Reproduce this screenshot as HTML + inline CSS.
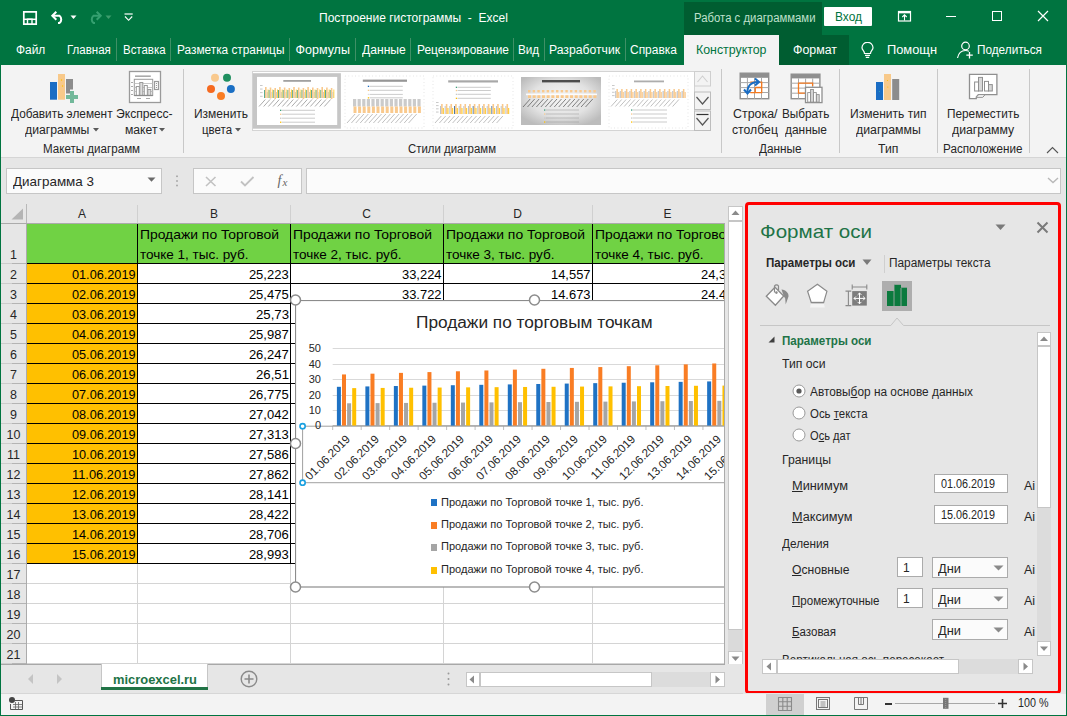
<!DOCTYPE html>
<html><head><meta charset="utf-8"><title>Excel</title>
<style>
html,body{margin:0;padding:0;}
body{width:1067px;height:716px;overflow:hidden;position:relative;background:#007440;font-family:'Liberation Sans', sans-serif;}
svg{display:block}
</style></head><body>
<div style="position:absolute;left:319.00px;top:11.84px;font-family:'Liberation Sans', sans-serif;font-size:12px;line-height:12px;height:12px;font-weight:400;color:#fff;white-space:pre;">Построение гистограммы  -  Excel</div>
<div style="position:absolute;left:684px;top:2px;width:138px;height:33px;background:#005d31;"></div>
<div style="position:absolute;left:684px;top:35px;width:165px;height:30px;background:#005d31;"></div>
<div style="position:absolute;left:693.50px;top:11.84px;font-family:'Liberation Sans', sans-serif;font-size:12px;line-height:12px;height:12px;font-weight:400;color:#bfe0cc;white-space:pre;transform:scaleX(0.9455);transform-origin:0 0;">Работа с диаграммами</div>
<div style="position:absolute;left:824px;top:7px;width:48px;height:18.5px;background:#fff;border-radius:1px;"></div>
<div style="position:absolute;left:835.00px;top:11.34px;font-family:'Liberation Sans', sans-serif;font-size:12px;line-height:12px;height:12px;font-weight:400;color:#007440;white-space:pre;transform:scaleX(0.9942);transform-origin:0 0;">Вход</div>
<div style="position:absolute;left:15.70px;top:43.92px;font-family:'Liberation Sans', sans-serif;font-size:12.5px;line-height:12.5px;height:12.5px;font-weight:400;color:#fff;white-space:pre;transform:scaleX(0.9533);transform-origin:0 0;">Файл</div>
<div style="position:absolute;left:67.00px;top:43.92px;font-family:'Liberation Sans', sans-serif;font-size:12.5px;line-height:12.5px;height:12.5px;font-weight:400;color:#fff;white-space:pre;transform:scaleX(0.9206);transform-origin:0 0;">Главная</div>
<div style="position:absolute;left:122.50px;top:43.92px;font-family:'Liberation Sans', sans-serif;font-size:12.5px;line-height:12.5px;height:12.5px;font-weight:400;color:#fff;white-space:pre;transform:scaleX(0.9167);transform-origin:0 0;">Вставка</div>
<div style="position:absolute;left:176.50px;top:43.92px;font-family:'Liberation Sans', sans-serif;font-size:12.5px;line-height:12.5px;height:12.5px;font-weight:400;color:#fff;white-space:pre;transform:scaleX(0.9470);transform-origin:0 0;">Разметка страницы</div>
<div style="position:absolute;left:295.50px;top:43.92px;font-family:'Liberation Sans', sans-serif;font-size:12.5px;line-height:12.5px;height:12.5px;font-weight:400;color:#fff;white-space:pre;">Формулы</div>
<div style="position:absolute;left:361.50px;top:43.92px;font-family:'Liberation Sans', sans-serif;font-size:12.5px;line-height:12.5px;height:12.5px;font-weight:400;color:#fff;white-space:pre;transform:scaleX(0.9696);transform-origin:0 0;">Данные</div>
<div style="position:absolute;left:416.50px;top:43.92px;font-family:'Liberation Sans', sans-serif;font-size:12.5px;line-height:12.5px;height:12.5px;font-weight:400;color:#fff;white-space:pre;transform:scaleX(0.9531);transform-origin:0 0;">Рецензирование</div>
<div style="position:absolute;left:518.30px;top:43.92px;font-family:'Liberation Sans', sans-serif;font-size:12.5px;line-height:12.5px;height:12.5px;font-weight:400;color:#fff;white-space:pre;transform:scaleX(0.9370);transform-origin:0 0;">Вид</div>
<div style="position:absolute;left:549.40px;top:43.92px;font-family:'Liberation Sans', sans-serif;font-size:12.5px;line-height:12.5px;height:12.5px;font-weight:400;color:#fff;white-space:pre;transform:scaleX(0.9752);transform-origin:0 0;">Разработчик</div>
<div style="position:absolute;left:630.30px;top:43.92px;font-family:'Liberation Sans', sans-serif;font-size:12.5px;line-height:12.5px;height:12.5px;font-weight:400;color:#fff;white-space:pre;transform:scaleX(0.9562);transform-origin:0 0;">Справка</div>
<div style="position:absolute;left:116px;top:38px;width:1px;height:23px;background:#3f9066;"></div>
<div style="position:absolute;left:170px;top:38px;width:1px;height:23px;background:#3f9066;"></div>
<div style="position:absolute;left:289px;top:38px;width:1px;height:23px;background:#3f9066;"></div>
<div style="position:absolute;left:355px;top:38px;width:1px;height:23px;background:#3f9066;"></div>
<div style="position:absolute;left:410px;top:38px;width:1px;height:23px;background:#3f9066;"></div>
<div style="position:absolute;left:513px;top:38px;width:1px;height:23px;background:#3f9066;"></div>
<div style="position:absolute;left:544px;top:38px;width:1px;height:23px;background:#3f9066;"></div>
<div style="position:absolute;left:625px;top:38px;width:1px;height:23px;background:#3f9066;"></div>
<div style="position:absolute;left:684px;top:35px;width:95px;height:30px;background:#f3f3f3;"></div>
<div style="position:absolute;left:696.00px;top:43.92px;font-family:'Liberation Sans', sans-serif;font-size:12.5px;line-height:12.5px;height:12.5px;font-weight:400;color:#007440;white-space:pre;transform:scaleX(0.9890);transform-origin:0 0;">Конструктор</div>
<div style="position:absolute;left:792.50px;top:43.92px;font-family:'Liberation Sans', sans-serif;font-size:12.5px;line-height:12.5px;height:12.5px;font-weight:400;color:#fff;white-space:pre;transform:scaleX(0.9909);transform-origin:0 0;">Формат</div>
<div style="position:absolute;left:887.00px;top:43.92px;font-family:'Liberation Sans', sans-serif;font-size:12.5px;line-height:12.5px;height:12.5px;font-weight:400;color:#fff;white-space:pre;transform:scaleX(1.0273);transform-origin:0 0;">Помощн</div>
<div style="position:absolute;left:977.00px;top:43.92px;font-family:'Liberation Sans', sans-serif;font-size:12.5px;line-height:12.5px;height:12.5px;font-weight:400;color:#fff;white-space:pre;transform:scaleX(0.9416);transform-origin:0 0;">Поделиться</div>
<div style="position:absolute;left:1px;top:65px;width:1065px;height:92px;background:#f3f3f3;"></div>
<div style="position:absolute;left:1px;top:157px;width:1065px;height:1px;background:#d5d5d5;"></div>
<div style="position:absolute;left:183px;top:69px;width:1px;height:84px;background:#c8c8c8;"></div>
<div style="position:absolute;left:721px;top:69px;width:1px;height:84px;background:#c8c8c8;"></div>
<div style="position:absolute;left:839px;top:69px;width:1px;height:84px;background:#c8c8c8;"></div>
<div style="position:absolute;left:937px;top:69px;width:1px;height:84px;background:#c8c8c8;"></div>
<div style="position:absolute;left:1029px;top:69px;width:1px;height:84px;background:#c8c8c8;"></div>
<div style="position:absolute;left:10.50px;top:108.32px;font-family:'Liberation Sans', sans-serif;font-size:12.5px;line-height:12.5px;height:12.5px;font-weight:400;color:#262626;white-space:pre;transform:scaleX(0.9473);transform-origin:0 0;">Добавить элемент</div>
<div style="position:absolute;left:25.10px;top:124.22px;font-family:'Liberation Sans', sans-serif;font-size:12.5px;line-height:12.5px;height:12.5px;font-weight:400;color:#262626;white-space:pre;transform:scaleX(0.9776);transform-origin:0 0;">диаграммы</div>
<div style="position:absolute;left:116.20px;top:108.32px;font-family:'Liberation Sans', sans-serif;font-size:12.5px;line-height:12.5px;height:12.5px;font-weight:400;color:#262626;white-space:pre;transform:scaleX(0.9727);transform-origin:0 0;">Экспресс-</div>
<div style="position:absolute;left:124.50px;top:124.22px;font-family:'Liberation Sans', sans-serif;font-size:12.5px;line-height:12.5px;height:12.5px;font-weight:400;color:#262626;white-space:pre;transform:scaleX(0.9724);transform-origin:0 0;">макет</div>
<div style="position:absolute;left:43.00px;top:143.42px;font-family:'Liberation Sans', sans-serif;font-size:12.5px;line-height:12.5px;height:12.5px;font-weight:400;color:#262626;white-space:pre;transform:scaleX(0.9272);transform-origin:0 0;">Макеты диаграмм</div>
<div style="position:absolute;left:194.00px;top:108.32px;font-family:'Liberation Sans', sans-serif;font-size:12.5px;line-height:12.5px;height:12.5px;font-weight:400;color:#262626;white-space:pre;transform:scaleX(0.9594);transform-origin:0 0;">Изменить</div>
<div style="position:absolute;left:201.50px;top:124.22px;font-family:'Liberation Sans', sans-serif;font-size:12.5px;line-height:12.5px;height:12.5px;font-weight:400;color:#262626;white-space:pre;transform:scaleX(0.9165);transform-origin:0 0;">цвета</div>
<div style="position:absolute;left:407.50px;top:143.42px;font-family:'Liberation Sans', sans-serif;font-size:12.5px;line-height:12.5px;height:12.5px;font-weight:400;color:#262626;white-space:pre;transform:scaleX(0.9131);transform-origin:0 0;">Стили диаграмм</div>
<div style="position:absolute;left:733.00px;top:108.32px;font-family:'Liberation Sans', sans-serif;font-size:12.5px;line-height:12.5px;height:12.5px;font-weight:400;color:#262626;white-space:pre;transform:scaleX(0.9927);transform-origin:0 0;">Строка/</div>
<div style="position:absolute;left:732.10px;top:124.22px;font-family:'Liberation Sans', sans-serif;font-size:12.5px;line-height:12.5px;height:12.5px;font-weight:400;color:#262626;white-space:pre;transform:scaleX(0.9779);transform-origin:0 0;">столбец</div>
<div style="position:absolute;left:781.90px;top:108.32px;font-family:'Liberation Sans', sans-serif;font-size:12.5px;line-height:12.5px;height:12.5px;font-weight:400;color:#262626;white-space:pre;transform:scaleX(0.9412);transform-origin:0 0;">Выбрать</div>
<div style="position:absolute;left:784.50px;top:124.22px;font-family:'Liberation Sans', sans-serif;font-size:12.5px;line-height:12.5px;height:12.5px;font-weight:400;color:#262626;white-space:pre;transform:scaleX(0.9545);transform-origin:0 0;">данные</div>
<div style="position:absolute;left:758.50px;top:143.42px;font-family:'Liberation Sans', sans-serif;font-size:12.5px;line-height:12.5px;height:12.5px;font-weight:400;color:#262626;white-space:pre;transform:scaleX(0.9431);transform-origin:0 0;">Данные</div>
<div style="position:absolute;left:849.50px;top:108.32px;font-family:'Liberation Sans', sans-serif;font-size:12.5px;line-height:12.5px;height:12.5px;font-weight:400;color:#262626;white-space:pre;transform:scaleX(0.9642);transform-origin:0 0;">Изменить тип</div>
<div style="position:absolute;left:855.50px;top:124.22px;font-family:'Liberation Sans', sans-serif;font-size:12.5px;line-height:12.5px;height:12.5px;font-weight:400;color:#262626;white-space:pre;transform:scaleX(0.9837);transform-origin:0 0;">диаграммы</div>
<div style="position:absolute;left:877.50px;top:143.42px;font-family:'Liberation Sans', sans-serif;font-size:12.5px;line-height:12.5px;height:12.5px;font-weight:400;color:#262626;white-space:pre;transform:scaleX(0.9787);transform-origin:0 0;">Тип</div>
<div style="position:absolute;left:946.90px;top:108.32px;font-family:'Liberation Sans', sans-serif;font-size:12.5px;line-height:12.5px;height:12.5px;font-weight:400;color:#262626;white-space:pre;transform:scaleX(0.9439);transform-origin:0 0;">Переместить</div>
<div style="position:absolute;left:952.30px;top:124.22px;font-family:'Liberation Sans', sans-serif;font-size:12.5px;line-height:12.5px;height:12.5px;font-weight:400;color:#262626;white-space:pre;transform:scaleX(0.9829);transform-origin:0 0;">диаграмму</div>
<div style="position:absolute;left:943.10px;top:143.42px;font-family:'Liberation Sans', sans-serif;font-size:12.5px;line-height:12.5px;height:12.5px;font-weight:400;color:#262626;white-space:pre;transform:scaleX(0.9345);transform-origin:0 0;">Расположение</div>
<div style="position:absolute;left:1px;top:158px;width:1065px;height:46px;background:#e6e6e6;"></div>
<div style="position:absolute;left:6px;top:168px;width:156px;height:26px;background:#fbfbfb;border:1px solid #c6c6c6;box-sizing:border-box;"></div>
<div style="position:absolute;left:13.00px;top:175.00px;font-family:'Liberation Sans', sans-serif;font-size:13px;line-height:13px;height:13px;font-weight:400;color:#262626;white-space:pre;transform:scaleX(1.0325);transform-origin:0 0;">Диаграмма 3</div>
<div style="position:absolute;left:193px;top:168px;width:109px;height:26px;background:#fbfbfb;border:1px solid #c6c6c6;box-sizing:border-box;"></div>
<div style="position:absolute;left:306px;top:168px;width:755px;height:26px;background:#fbfbfb;border:1px solid #c6c6c6;box-sizing:border-box;"></div>
<div style="position:absolute;left:1px;top:204px;width:742px;height:460px;background:#e6e6e6;"></div>
<div style="position:absolute;left:27px;top:224px;width:697px;height:440px;background:#fff;"></div>
<div style="position:absolute;left:137px;top:224px;width:1px;height:440px;background:#d4d4d4;"></div>
<div style="position:absolute;left:290px;top:224px;width:1px;height:440px;background:#d4d4d4;"></div>
<div style="position:absolute;left:443px;top:224px;width:1px;height:440px;background:#d4d4d4;"></div>
<div style="position:absolute;left:592px;top:224px;width:1px;height:440px;background:#d4d4d4;"></div>
<div style="position:absolute;left:27px;top:263px;width:697px;height:1px;background:#d4d4d4;"></div>
<div style="position:absolute;left:27px;top:283px;width:697px;height:1px;background:#d4d4d4;"></div>
<div style="position:absolute;left:27px;top:303px;width:697px;height:1px;background:#d4d4d4;"></div>
<div style="position:absolute;left:27px;top:323px;width:697px;height:1px;background:#d4d4d4;"></div>
<div style="position:absolute;left:27px;top:343px;width:697px;height:1px;background:#d4d4d4;"></div>
<div style="position:absolute;left:27px;top:363px;width:697px;height:1px;background:#d4d4d4;"></div>
<div style="position:absolute;left:27px;top:383px;width:697px;height:1px;background:#d4d4d4;"></div>
<div style="position:absolute;left:27px;top:403px;width:697px;height:1px;background:#d4d4d4;"></div>
<div style="position:absolute;left:27px;top:423px;width:697px;height:1px;background:#d4d4d4;"></div>
<div style="position:absolute;left:27px;top:443px;width:697px;height:1px;background:#d4d4d4;"></div>
<div style="position:absolute;left:27px;top:463px;width:697px;height:1px;background:#d4d4d4;"></div>
<div style="position:absolute;left:27px;top:483px;width:697px;height:1px;background:#d4d4d4;"></div>
<div style="position:absolute;left:27px;top:503px;width:697px;height:1px;background:#d4d4d4;"></div>
<div style="position:absolute;left:27px;top:523px;width:697px;height:1px;background:#d4d4d4;"></div>
<div style="position:absolute;left:27px;top:543px;width:697px;height:1px;background:#d4d4d4;"></div>
<div style="position:absolute;left:27px;top:563px;width:697px;height:1px;background:#d4d4d4;"></div>
<div style="position:absolute;left:27px;top:583px;width:697px;height:1px;background:#d4d4d4;"></div>
<div style="position:absolute;left:27px;top:603px;width:697px;height:1px;background:#d4d4d4;"></div>
<div style="position:absolute;left:27px;top:623px;width:697px;height:1px;background:#d4d4d4;"></div>
<div style="position:absolute;left:27px;top:643px;width:697px;height:1px;background:#d4d4d4;"></div>
<div style="position:absolute;left:27px;top:663px;width:697px;height:1px;background:#d4d4d4;"></div>
<div style="position:absolute;left:27px;top:224px;width:110px;height:39px;background:#70d244;"></div>
<div style="position:absolute;left:138px;top:224px;width:152px;height:39px;background:#70d244;"></div>
<div style="position:absolute;left:291px;top:224px;width:152px;height:39px;background:#70d244;"></div>
<div style="position:absolute;left:444px;top:224px;width:148px;height:39px;background:#70d244;"></div>
<div style="position:absolute;left:593px;top:224px;width:149px;height:39px;background:#70d244;"></div>
<div style="position:absolute;left:27px;top:264px;width:110px;height:299px;background:#ffc000;"></div>
<div style="position:absolute;left:27px;top:263px;width:697px;height:1px;background:#000;"></div>
<div style="position:absolute;left:27px;top:283px;width:697px;height:1px;background:#000;"></div>
<div style="position:absolute;left:27px;top:303px;width:697px;height:1px;background:#000;"></div>
<div style="position:absolute;left:27px;top:323px;width:697px;height:1px;background:#000;"></div>
<div style="position:absolute;left:27px;top:343px;width:697px;height:1px;background:#000;"></div>
<div style="position:absolute;left:27px;top:363px;width:697px;height:1px;background:#000;"></div>
<div style="position:absolute;left:27px;top:383px;width:697px;height:1px;background:#000;"></div>
<div style="position:absolute;left:27px;top:403px;width:697px;height:1px;background:#000;"></div>
<div style="position:absolute;left:27px;top:423px;width:697px;height:1px;background:#000;"></div>
<div style="position:absolute;left:27px;top:443px;width:697px;height:1px;background:#000;"></div>
<div style="position:absolute;left:27px;top:463px;width:697px;height:1px;background:#000;"></div>
<div style="position:absolute;left:27px;top:483px;width:697px;height:1px;background:#000;"></div>
<div style="position:absolute;left:27px;top:503px;width:697px;height:1px;background:#000;"></div>
<div style="position:absolute;left:27px;top:523px;width:697px;height:1px;background:#000;"></div>
<div style="position:absolute;left:27px;top:543px;width:697px;height:1px;background:#000;"></div>
<div style="position:absolute;left:27px;top:563px;width:697px;height:1px;background:#000;"></div>
<div style="position:absolute;left:137px;top:224px;width:1px;height:339px;background:#000;"></div>
<div style="position:absolute;left:290px;top:224px;width:1px;height:339px;background:#000;"></div>
<div style="position:absolute;left:443px;top:224px;width:1px;height:339px;background:#000;"></div>
<div style="position:absolute;left:592px;top:224px;width:1px;height:339px;background:#000;"></div>
<div style="position:absolute;left:26px;top:204px;width:1px;height:20px;background:#b8b8b8;"></div>
<div style="position:absolute;left:137px;top:205px;width:1px;height:18px;background:#d0d0d0;"></div>
<div style="position:absolute;left:290px;top:205px;width:1px;height:18px;background:#d0d0d0;"></div>
<div style="position:absolute;left:443px;top:205px;width:1px;height:18px;background:#d0d0d0;"></div>
<div style="position:absolute;left:592px;top:205px;width:1px;height:18px;background:#d0d0d0;"></div>
<div style="position:absolute;left:1px;top:223px;width:723px;height:1px;background:#ababab;"></div>
<svg style="position:absolute;left:11px;top:208px;" width="13" height="12" viewBox="0 0 13 12"><polygon points="12,0.5 12,11.5 0.5,11.5" fill="#b4b4b4"/></svg>
<div style="position:absolute;left:77.99px;top:207.84px;font-family:'Liberation Sans', sans-serif;font-size:12px;line-height:12px;height:12px;font-weight:400;color:#262626;white-space:pre;">A</div>
<div style="position:absolute;left:209.99px;top:207.84px;font-family:'Liberation Sans', sans-serif;font-size:12px;line-height:12px;height:12px;font-weight:400;color:#262626;white-space:pre;">B</div>
<div style="position:absolute;left:362.16px;top:207.84px;font-family:'Liberation Sans', sans-serif;font-size:12px;line-height:12px;height:12px;font-weight:400;color:#262626;white-space:pre;">C</div>
<div style="position:absolute;left:513.16px;top:207.84px;font-family:'Liberation Sans', sans-serif;font-size:12px;line-height:12px;height:12px;font-weight:400;color:#262626;white-space:pre;">D</div>
<div style="position:absolute;left:663.49px;top:207.84px;font-family:'Liberation Sans', sans-serif;font-size:12px;line-height:12px;height:12px;font-weight:400;color:#262626;white-space:pre;">E</div>
<div style="position:absolute;left:26px;top:224px;width:1px;height:440px;background:#ababab;"></div>
<div style="position:absolute;left:1px;top:263px;width:25px;height:1px;background:#cdcdcd;"></div>
<div style="position:absolute;left:12px;top:263px;width:14px;height:1px;background:#b4b4b4;"></div>
<div style="position:absolute;left:10.02px;top:248.72px;font-family:'Liberation Sans', sans-serif;font-size:12.5px;line-height:12.5px;height:12.5px;font-weight:400;color:#262626;white-space:pre;">1</div>
<div style="position:absolute;left:1px;top:283px;width:25px;height:1px;background:#cdcdcd;"></div>
<div style="position:absolute;left:12px;top:283px;width:14px;height:1px;background:#b4b4b4;"></div>
<div style="position:absolute;left:10.02px;top:268.72px;font-family:'Liberation Sans', sans-serif;font-size:12.5px;line-height:12.5px;height:12.5px;font-weight:400;color:#262626;white-space:pre;">2</div>
<div style="position:absolute;left:1px;top:303px;width:25px;height:1px;background:#cdcdcd;"></div>
<div style="position:absolute;left:12px;top:303px;width:14px;height:1px;background:#b4b4b4;"></div>
<div style="position:absolute;left:10.02px;top:288.72px;font-family:'Liberation Sans', sans-serif;font-size:12.5px;line-height:12.5px;height:12.5px;font-weight:400;color:#262626;white-space:pre;">3</div>
<div style="position:absolute;left:1px;top:323px;width:25px;height:1px;background:#cdcdcd;"></div>
<div style="position:absolute;left:12px;top:323px;width:14px;height:1px;background:#b4b4b4;"></div>
<div style="position:absolute;left:10.02px;top:308.72px;font-family:'Liberation Sans', sans-serif;font-size:12.5px;line-height:12.5px;height:12.5px;font-weight:400;color:#262626;white-space:pre;">4</div>
<div style="position:absolute;left:1px;top:343px;width:25px;height:1px;background:#cdcdcd;"></div>
<div style="position:absolute;left:12px;top:343px;width:14px;height:1px;background:#b4b4b4;"></div>
<div style="position:absolute;left:10.02px;top:328.72px;font-family:'Liberation Sans', sans-serif;font-size:12.5px;line-height:12.5px;height:12.5px;font-weight:400;color:#262626;white-space:pre;">5</div>
<div style="position:absolute;left:1px;top:363px;width:25px;height:1px;background:#cdcdcd;"></div>
<div style="position:absolute;left:12px;top:363px;width:14px;height:1px;background:#b4b4b4;"></div>
<div style="position:absolute;left:10.02px;top:348.72px;font-family:'Liberation Sans', sans-serif;font-size:12.5px;line-height:12.5px;height:12.5px;font-weight:400;color:#262626;white-space:pre;">6</div>
<div style="position:absolute;left:1px;top:383px;width:25px;height:1px;background:#cdcdcd;"></div>
<div style="position:absolute;left:12px;top:383px;width:14px;height:1px;background:#b4b4b4;"></div>
<div style="position:absolute;left:10.02px;top:368.72px;font-family:'Liberation Sans', sans-serif;font-size:12.5px;line-height:12.5px;height:12.5px;font-weight:400;color:#262626;white-space:pre;">7</div>
<div style="position:absolute;left:1px;top:403px;width:25px;height:1px;background:#cdcdcd;"></div>
<div style="position:absolute;left:12px;top:403px;width:14px;height:1px;background:#b4b4b4;"></div>
<div style="position:absolute;left:10.02px;top:388.72px;font-family:'Liberation Sans', sans-serif;font-size:12.5px;line-height:12.5px;height:12.5px;font-weight:400;color:#262626;white-space:pre;">8</div>
<div style="position:absolute;left:1px;top:423px;width:25px;height:1px;background:#cdcdcd;"></div>
<div style="position:absolute;left:12px;top:423px;width:14px;height:1px;background:#b4b4b4;"></div>
<div style="position:absolute;left:10.02px;top:408.72px;font-family:'Liberation Sans', sans-serif;font-size:12.5px;line-height:12.5px;height:12.5px;font-weight:400;color:#262626;white-space:pre;">9</div>
<div style="position:absolute;left:1px;top:443px;width:25px;height:1px;background:#cdcdcd;"></div>
<div style="position:absolute;left:12px;top:443px;width:14px;height:1px;background:#b4b4b4;"></div>
<div style="position:absolute;left:6.55px;top:428.72px;font-family:'Liberation Sans', sans-serif;font-size:12.5px;line-height:12.5px;height:12.5px;font-weight:400;color:#262626;white-space:pre;">10</div>
<div style="position:absolute;left:1px;top:463px;width:25px;height:1px;background:#cdcdcd;"></div>
<div style="position:absolute;left:12px;top:463px;width:14px;height:1px;background:#b4b4b4;"></div>
<div style="position:absolute;left:7.01px;top:448.72px;font-family:'Liberation Sans', sans-serif;font-size:12.5px;line-height:12.5px;height:12.5px;font-weight:400;color:#262626;white-space:pre;">11</div>
<div style="position:absolute;left:1px;top:483px;width:25px;height:1px;background:#cdcdcd;"></div>
<div style="position:absolute;left:12px;top:483px;width:14px;height:1px;background:#b4b4b4;"></div>
<div style="position:absolute;left:6.55px;top:468.72px;font-family:'Liberation Sans', sans-serif;font-size:12.5px;line-height:12.5px;height:12.5px;font-weight:400;color:#262626;white-space:pre;">12</div>
<div style="position:absolute;left:1px;top:503px;width:25px;height:1px;background:#cdcdcd;"></div>
<div style="position:absolute;left:12px;top:503px;width:14px;height:1px;background:#b4b4b4;"></div>
<div style="position:absolute;left:6.55px;top:488.72px;font-family:'Liberation Sans', sans-serif;font-size:12.5px;line-height:12.5px;height:12.5px;font-weight:400;color:#262626;white-space:pre;">13</div>
<div style="position:absolute;left:1px;top:523px;width:25px;height:1px;background:#cdcdcd;"></div>
<div style="position:absolute;left:12px;top:523px;width:14px;height:1px;background:#b4b4b4;"></div>
<div style="position:absolute;left:6.55px;top:508.72px;font-family:'Liberation Sans', sans-serif;font-size:12.5px;line-height:12.5px;height:12.5px;font-weight:400;color:#262626;white-space:pre;">14</div>
<div style="position:absolute;left:1px;top:543px;width:25px;height:1px;background:#cdcdcd;"></div>
<div style="position:absolute;left:12px;top:543px;width:14px;height:1px;background:#b4b4b4;"></div>
<div style="position:absolute;left:6.55px;top:528.72px;font-family:'Liberation Sans', sans-serif;font-size:12.5px;line-height:12.5px;height:12.5px;font-weight:400;color:#262626;white-space:pre;">15</div>
<div style="position:absolute;left:1px;top:563px;width:25px;height:1px;background:#cdcdcd;"></div>
<div style="position:absolute;left:12px;top:563px;width:14px;height:1px;background:#b4b4b4;"></div>
<div style="position:absolute;left:6.55px;top:548.72px;font-family:'Liberation Sans', sans-serif;font-size:12.5px;line-height:12.5px;height:12.5px;font-weight:400;color:#262626;white-space:pre;">16</div>
<div style="position:absolute;left:1px;top:583px;width:25px;height:1px;background:#cdcdcd;"></div>
<div style="position:absolute;left:12px;top:583px;width:14px;height:1px;background:#b4b4b4;"></div>
<div style="position:absolute;left:6.55px;top:568.72px;font-family:'Liberation Sans', sans-serif;font-size:12.5px;line-height:12.5px;height:12.5px;font-weight:400;color:#262626;white-space:pre;">17</div>
<div style="position:absolute;left:1px;top:603px;width:25px;height:1px;background:#cdcdcd;"></div>
<div style="position:absolute;left:12px;top:603px;width:14px;height:1px;background:#b4b4b4;"></div>
<div style="position:absolute;left:6.55px;top:588.72px;font-family:'Liberation Sans', sans-serif;font-size:12.5px;line-height:12.5px;height:12.5px;font-weight:400;color:#262626;white-space:pre;">18</div>
<div style="position:absolute;left:1px;top:623px;width:25px;height:1px;background:#cdcdcd;"></div>
<div style="position:absolute;left:12px;top:623px;width:14px;height:1px;background:#b4b4b4;"></div>
<div style="position:absolute;left:6.55px;top:608.72px;font-family:'Liberation Sans', sans-serif;font-size:12.5px;line-height:12.5px;height:12.5px;font-weight:400;color:#262626;white-space:pre;">19</div>
<div style="position:absolute;left:1px;top:643px;width:25px;height:1px;background:#cdcdcd;"></div>
<div style="position:absolute;left:12px;top:643px;width:14px;height:1px;background:#b4b4b4;"></div>
<div style="position:absolute;left:6.55px;top:628.72px;font-family:'Liberation Sans', sans-serif;font-size:12.5px;line-height:12.5px;height:12.5px;font-weight:400;color:#262626;white-space:pre;">20</div>
<div style="position:absolute;left:1px;top:663px;width:25px;height:1px;background:#cdcdcd;"></div>
<div style="position:absolute;left:12px;top:663px;width:14px;height:1px;background:#b4b4b4;"></div>
<div style="position:absolute;left:6.55px;top:648.72px;font-family:'Liberation Sans', sans-serif;font-size:12.5px;line-height:12.5px;height:12.5px;font-weight:400;color:#262626;white-space:pre;">21</div>
<div style="position:absolute;left:71.50px;top:267.50px;font-family:'Liberation Sans', sans-serif;font-size:13px;line-height:13px;height:13px;font-weight:400;color:#000;white-space:pre;transform:scaleX(0.9758);transform-origin:0 0;">01.06.2019</div>
<div style="position:absolute;left:248.90px;top:267.50px;font-family:'Liberation Sans', sans-serif;font-size:13px;line-height:13px;height:13px;font-weight:400;color:#000;white-space:pre;">25,223</div>
<div style="position:absolute;left:71.50px;top:287.50px;font-family:'Liberation Sans', sans-serif;font-size:13px;line-height:13px;height:13px;font-weight:400;color:#000;white-space:pre;transform:scaleX(0.9758);transform-origin:0 0;">02.06.2019</div>
<div style="position:absolute;left:248.90px;top:287.50px;font-family:'Liberation Sans', sans-serif;font-size:13px;line-height:13px;height:13px;font-weight:400;color:#000;white-space:pre;">25,475</div>
<div style="position:absolute;left:71.50px;top:307.50px;font-family:'Liberation Sans', sans-serif;font-size:13px;line-height:13px;height:13px;font-weight:400;color:#000;white-space:pre;transform:scaleX(0.9758);transform-origin:0 0;">03.06.2019</div>
<div style="position:absolute;left:255.50px;top:307.50px;font-family:'Liberation Sans', sans-serif;font-size:13px;line-height:13px;height:13px;font-weight:400;color:#000;white-space:pre;transform:scaleX(1.0139);transform-origin:0 0;">25,73</div>
<div style="position:absolute;left:71.50px;top:327.50px;font-family:'Liberation Sans', sans-serif;font-size:13px;line-height:13px;height:13px;font-weight:400;color:#000;white-space:pre;transform:scaleX(0.9758);transform-origin:0 0;">04.06.2019</div>
<div style="position:absolute;left:248.90px;top:327.50px;font-family:'Liberation Sans', sans-serif;font-size:13px;line-height:13px;height:13px;font-weight:400;color:#000;white-space:pre;">25,987</div>
<div style="position:absolute;left:71.50px;top:347.50px;font-family:'Liberation Sans', sans-serif;font-size:13px;line-height:13px;height:13px;font-weight:400;color:#000;white-space:pre;transform:scaleX(0.9758);transform-origin:0 0;">05.06.2019</div>
<div style="position:absolute;left:248.90px;top:347.50px;font-family:'Liberation Sans', sans-serif;font-size:13px;line-height:13px;height:13px;font-weight:400;color:#000;white-space:pre;">26,247</div>
<div style="position:absolute;left:71.50px;top:367.50px;font-family:'Liberation Sans', sans-serif;font-size:13px;line-height:13px;height:13px;font-weight:400;color:#000;white-space:pre;transform:scaleX(0.9758);transform-origin:0 0;">06.06.2019</div>
<div style="position:absolute;left:255.50px;top:367.50px;font-family:'Liberation Sans', sans-serif;font-size:13px;line-height:13px;height:13px;font-weight:400;color:#000;white-space:pre;transform:scaleX(1.0139);transform-origin:0 0;">26,51</div>
<div style="position:absolute;left:71.50px;top:387.50px;font-family:'Liberation Sans', sans-serif;font-size:13px;line-height:13px;height:13px;font-weight:400;color:#000;white-space:pre;transform:scaleX(0.9758);transform-origin:0 0;">07.06.2019</div>
<div style="position:absolute;left:248.90px;top:387.50px;font-family:'Liberation Sans', sans-serif;font-size:13px;line-height:13px;height:13px;font-weight:400;color:#000;white-space:pre;">26,775</div>
<div style="position:absolute;left:71.50px;top:407.50px;font-family:'Liberation Sans', sans-serif;font-size:13px;line-height:13px;height:13px;font-weight:400;color:#000;white-space:pre;transform:scaleX(0.9758);transform-origin:0 0;">08.06.2019</div>
<div style="position:absolute;left:248.90px;top:407.50px;font-family:'Liberation Sans', sans-serif;font-size:13px;line-height:13px;height:13px;font-weight:400;color:#000;white-space:pre;">27,042</div>
<div style="position:absolute;left:71.50px;top:427.50px;font-family:'Liberation Sans', sans-serif;font-size:13px;line-height:13px;height:13px;font-weight:400;color:#000;white-space:pre;transform:scaleX(0.9758);transform-origin:0 0;">09.06.2019</div>
<div style="position:absolute;left:248.90px;top:427.50px;font-family:'Liberation Sans', sans-serif;font-size:13px;line-height:13px;height:13px;font-weight:400;color:#000;white-space:pre;">27,313</div>
<div style="position:absolute;left:71.50px;top:447.50px;font-family:'Liberation Sans', sans-serif;font-size:13px;line-height:13px;height:13px;font-weight:400;color:#000;white-space:pre;transform:scaleX(0.9758);transform-origin:0 0;">10.06.2019</div>
<div style="position:absolute;left:248.90px;top:447.50px;font-family:'Liberation Sans', sans-serif;font-size:13px;line-height:13px;height:13px;font-weight:400;color:#000;white-space:pre;">27,586</div>
<div style="position:absolute;left:71.50px;top:467.50px;font-family:'Liberation Sans', sans-serif;font-size:13px;line-height:13px;height:13px;font-weight:400;color:#000;white-space:pre;transform:scaleX(0.9905);transform-origin:0 0;">11.06.2019</div>
<div style="position:absolute;left:248.90px;top:467.50px;font-family:'Liberation Sans', sans-serif;font-size:13px;line-height:13px;height:13px;font-weight:400;color:#000;white-space:pre;">27,862</div>
<div style="position:absolute;left:71.50px;top:487.50px;font-family:'Liberation Sans', sans-serif;font-size:13px;line-height:13px;height:13px;font-weight:400;color:#000;white-space:pre;transform:scaleX(0.9758);transform-origin:0 0;">12.06.2019</div>
<div style="position:absolute;left:248.90px;top:487.50px;font-family:'Liberation Sans', sans-serif;font-size:13px;line-height:13px;height:13px;font-weight:400;color:#000;white-space:pre;">28,141</div>
<div style="position:absolute;left:71.50px;top:507.50px;font-family:'Liberation Sans', sans-serif;font-size:13px;line-height:13px;height:13px;font-weight:400;color:#000;white-space:pre;transform:scaleX(0.9758);transform-origin:0 0;">13.06.2019</div>
<div style="position:absolute;left:248.90px;top:507.50px;font-family:'Liberation Sans', sans-serif;font-size:13px;line-height:13px;height:13px;font-weight:400;color:#000;white-space:pre;">28,422</div>
<div style="position:absolute;left:71.50px;top:527.50px;font-family:'Liberation Sans', sans-serif;font-size:13px;line-height:13px;height:13px;font-weight:400;color:#000;white-space:pre;transform:scaleX(0.9758);transform-origin:0 0;">14.06.2019</div>
<div style="position:absolute;left:248.90px;top:527.50px;font-family:'Liberation Sans', sans-serif;font-size:13px;line-height:13px;height:13px;font-weight:400;color:#000;white-space:pre;">28,706</div>
<div style="position:absolute;left:71.50px;top:547.50px;font-family:'Liberation Sans', sans-serif;font-size:13px;line-height:13px;height:13px;font-weight:400;color:#000;white-space:pre;transform:scaleX(0.9758);transform-origin:0 0;">15.06.2019</div>
<div style="position:absolute;left:248.90px;top:547.50px;font-family:'Liberation Sans', sans-serif;font-size:13px;line-height:13px;height:13px;font-weight:400;color:#000;white-space:pre;">28,993</div>
<div style="position:absolute;left:139.70px;top:227.90px;font-family:'Liberation Sans', sans-serif;font-size:13px;line-height:13px;height:13px;font-weight:400;color:#000;white-space:pre;transform:scaleX(1.0683);transform-origin:0 0;">Продажи по Торговой</div>
<div style="position:absolute;left:139.70px;top:247.60px;font-family:'Liberation Sans', sans-serif;font-size:13px;line-height:13px;height:13px;font-weight:400;color:#000;white-space:pre;transform:scaleX(1.0386);transform-origin:0 0;">точке 1, тыс. руб.</div>
<div style="position:absolute;left:292.70px;top:227.90px;font-family:'Liberation Sans', sans-serif;font-size:13px;line-height:13px;height:13px;font-weight:400;color:#000;white-space:pre;transform:scaleX(1.0683);transform-origin:0 0;">Продажи по Торговой</div>
<div style="position:absolute;left:292.70px;top:247.60px;font-family:'Liberation Sans', sans-serif;font-size:13px;line-height:13px;height:13px;font-weight:400;color:#000;white-space:pre;transform:scaleX(1.0386);transform-origin:0 0;">точке 2, тыс. руб.</div>
<div style="position:absolute;left:445.70px;top:227.90px;font-family:'Liberation Sans', sans-serif;font-size:13px;line-height:13px;height:13px;font-weight:400;color:#000;white-space:pre;transform:scaleX(1.0683);transform-origin:0 0;">Продажи по Торговой</div>
<div style="position:absolute;left:445.70px;top:247.60px;font-family:'Liberation Sans', sans-serif;font-size:13px;line-height:13px;height:13px;font-weight:400;color:#000;white-space:pre;transform:scaleX(1.0386);transform-origin:0 0;">точке 3, тыс. руб.</div>
<div style="position:absolute;left:594.70px;top:227.90px;font-family:'Liberation Sans', sans-serif;font-size:13px;line-height:13px;height:13px;font-weight:400;color:#000;white-space:pre;transform:scaleX(1.0683);transform-origin:0 0;">Продажи по Торговой</div>
<div style="position:absolute;left:594.70px;top:247.60px;font-family:'Liberation Sans', sans-serif;font-size:13px;line-height:13px;height:13px;font-weight:400;color:#000;white-space:pre;transform:scaleX(1.0386);transform-origin:0 0;">точке 4, тыс. руб.</div>
<div style="position:absolute;left:401.50px;top:267.50px;font-family:'Liberation Sans', sans-serif;font-size:13px;line-height:13px;height:13px;font-weight:400;color:#000;white-space:pre;transform:scaleX(0.9933);transform-origin:0 0;">33,224</div>
<div style="position:absolute;left:550.50px;top:267.50px;font-family:'Liberation Sans', sans-serif;font-size:13px;line-height:13px;height:13px;font-weight:400;color:#000;white-space:pre;transform:scaleX(0.9933);transform-origin:0 0;">14,557</div>
<div style="position:absolute;left:700.50px;top:267.50px;font-family:'Liberation Sans', sans-serif;font-size:13px;line-height:13px;height:13px;font-weight:400;color:#000;white-space:pre;transform:scaleX(0.9933);transform-origin:0 0;">24,374</div>
<div style="position:absolute;left:401.50px;top:287.50px;font-family:'Liberation Sans', sans-serif;font-size:13px;line-height:13px;height:13px;font-weight:400;color:#000;white-space:pre;transform:scaleX(0.9933);transform-origin:0 0;">33.722</div>
<div style="position:absolute;left:550.50px;top:287.50px;font-family:'Liberation Sans', sans-serif;font-size:13px;line-height:13px;height:13px;font-weight:400;color:#000;white-space:pre;transform:scaleX(0.9933);transform-origin:0 0;">14.673</div>
<div style="position:absolute;left:700.50px;top:287.50px;font-family:'Liberation Sans', sans-serif;font-size:13px;line-height:13px;height:13px;font-weight:400;color:#000;white-space:pre;transform:scaleX(0.9933);transform-origin:0 0;">24.496</div>
<div style="position:absolute;left:724px;top:204px;width:19px;height:460px;background:#e6e6e6;"></div>
<div style="position:absolute;left:724px;top:223px;width:1px;height:441px;background:#ababab;"></div>
<div style="position:absolute;left:728px;top:221px;width:15px;height:431px;background:#dadada;"></div>
<div style="position:absolute;left:728px;top:206px;width:15px;height:15px;background:#fff;border:1px solid #c6c6c6;box-sizing:border-box;"></div>
<svg style="position:absolute;left:731px;top:210px;" width="9" height="6" viewBox="0 0 9 6"><polygon points="4.5,0.5 8.5,5 0.5,5" fill="#8a8a8a"/></svg>
<div style="position:absolute;left:728px;top:221px;width:15px;height:409px;background:#fff;border:1px solid #c6c6c6;box-sizing:border-box;"></div>
<div style="position:absolute;left:728px;top:651px;width:15px;height:15px;background:#fff;border:1px solid #c6c6c6;box-sizing:border-box;"></div>
<svg style="position:absolute;left:731px;top:656px;" width="9" height="6" viewBox="0 0 9 6"><polygon points="0.5,0.5 8.5,0.5 4.5,5" fill="#8a8a8a"/></svg>
<svg style="position:absolute;left:295px;top:300px;" width="429" height="288" viewBox="0 0 429 288"><rect x="0.5" y="0.5" width="478" height="286.5" fill="#fff" stroke="#8c8c8c" stroke-width="1.2"/><line x1="37.7" x2="470" y1="48.5" y2="48.5" stroke="#d9d9d9" stroke-width="1"/><line x1="37.7" x2="470" y1="64.5" y2="64.5" stroke="#d9d9d9" stroke-width="1"/><line x1="37.7" x2="470" y1="79.5" y2="79.5" stroke="#d9d9d9" stroke-width="1"/><line x1="37.7" x2="470" y1="95.5" y2="95.5" stroke="#d9d9d9" stroke-width="1"/><line x1="37.7" x2="470" y1="110.5" y2="110.5" stroke="#d9d9d9" stroke-width="1"/><line x1="37.7" x2="470" y1="125.5" y2="125.5" stroke="#b8b8b8" stroke-width="1"/><line x1="37.70" x2="37.70" y1="125.80000000000001" y2="130" stroke="#bfbfbf" stroke-width="1"/><rect x="41.90" y="86.81" width="4" height="38.99" fill="#1f72c4"/><rect x="47.00" y="74.44" width="4" height="51.36" fill="#f97d24"/><rect x="52.10" y="103.29" width="4" height="22.51" fill="#a5a5a5"/><rect x="57.20" y="88.12" width="4" height="37.68" fill="#ffc000"/><line x1="66.18" x2="66.18" y1="125.80000000000001" y2="130" stroke="#bfbfbf" stroke-width="1"/><rect x="70.38" y="86.42" width="4" height="39.38" fill="#1f72c4"/><rect x="75.48" y="73.67" width="4" height="52.13" fill="#f97d24"/><rect x="80.58" y="103.11" width="4" height="22.69" fill="#a5a5a5"/><rect x="85.68" y="87.93" width="4" height="37.87" fill="#ffc000"/><line x1="94.66" x2="94.66" y1="125.80000000000001" y2="130" stroke="#bfbfbf" stroke-width="1"/><rect x="98.86" y="86.02" width="4" height="39.78" fill="#1f72c4"/><rect x="103.96" y="72.88" width="4" height="52.92" fill="#f97d24"/><rect x="109.06" y="102.93" width="4" height="22.87" fill="#a5a5a5"/><rect x="114.16" y="87.74" width="4" height="38.06" fill="#ffc000"/><line x1="123.14" x2="123.14" y1="125.80000000000001" y2="130" stroke="#bfbfbf" stroke-width="1"/><rect x="127.34" y="85.62" width="4" height="40.18" fill="#1f72c4"/><rect x="132.44" y="72.09" width="4" height="53.71" fill="#f97d24"/><rect x="137.54" y="102.75" width="4" height="23.05" fill="#a5a5a5"/><rect x="142.64" y="87.55" width="4" height="38.25" fill="#ffc000"/><line x1="151.62" x2="151.62" y1="125.80000000000001" y2="130" stroke="#bfbfbf" stroke-width="1"/><rect x="155.82" y="85.22" width="4" height="40.58" fill="#1f72c4"/><rect x="160.92" y="71.28" width="4" height="54.52" fill="#f97d24"/><rect x="166.02" y="102.57" width="4" height="23.23" fill="#a5a5a5"/><rect x="171.12" y="87.36" width="4" height="38.44" fill="#ffc000"/><line x1="180.10" x2="180.10" y1="125.80000000000001" y2="130" stroke="#bfbfbf" stroke-width="1"/><rect x="184.30" y="84.82" width="4" height="40.98" fill="#1f72c4"/><rect x="189.40" y="70.47" width="4" height="55.33" fill="#f97d24"/><rect x="194.50" y="102.38" width="4" height="23.42" fill="#a5a5a5"/><rect x="199.60" y="87.17" width="4" height="38.63" fill="#ffc000"/><line x1="208.58" x2="208.58" y1="125.80000000000001" y2="130" stroke="#bfbfbf" stroke-width="1"/><rect x="212.78" y="84.41" width="4" height="41.39" fill="#1f72c4"/><rect x="217.88" y="69.64" width="4" height="56.16" fill="#f97d24"/><rect x="222.98" y="102.19" width="4" height="23.61" fill="#a5a5a5"/><rect x="228.08" y="86.97" width="4" height="38.83" fill="#ffc000"/><line x1="237.06" x2="237.06" y1="125.80000000000001" y2="130" stroke="#bfbfbf" stroke-width="1"/><rect x="241.26" y="83.99" width="4" height="41.81" fill="#1f72c4"/><rect x="246.36" y="68.79" width="4" height="57.01" fill="#f97d24"/><rect x="251.46" y="102.00" width="4" height="23.80" fill="#a5a5a5"/><rect x="256.56" y="86.78" width="4" height="39.02" fill="#ffc000"/><line x1="265.54" x2="265.54" y1="125.80000000000001" y2="130" stroke="#bfbfbf" stroke-width="1"/><rect x="269.74" y="83.57" width="4" height="42.23" fill="#1f72c4"/><rect x="274.84" y="67.94" width="4" height="57.86" fill="#f97d24"/><rect x="279.94" y="101.81" width="4" height="23.99" fill="#a5a5a5"/><rect x="285.04" y="86.58" width="4" height="39.22" fill="#ffc000"/><line x1="294.02" x2="294.02" y1="125.80000000000001" y2="130" stroke="#bfbfbf" stroke-width="1"/><rect x="298.22" y="83.15" width="4" height="42.65" fill="#1f72c4"/><rect x="303.32" y="67.07" width="4" height="58.73" fill="#f97d24"/><rect x="308.42" y="101.62" width="4" height="24.18" fill="#a5a5a5"/><rect x="313.52" y="86.39" width="4" height="39.41" fill="#ffc000"/><line x1="322.50" x2="322.50" y1="125.80000000000001" y2="130" stroke="#bfbfbf" stroke-width="1"/><rect x="326.70" y="82.73" width="4" height="43.07" fill="#1f72c4"/><rect x="331.80" y="66.19" width="4" height="59.61" fill="#f97d24"/><rect x="336.90" y="101.43" width="4" height="24.37" fill="#a5a5a5"/><rect x="342.00" y="86.19" width="4" height="39.61" fill="#ffc000"/><line x1="350.98" x2="350.98" y1="125.80000000000001" y2="130" stroke="#bfbfbf" stroke-width="1"/><rect x="355.18" y="82.29" width="4" height="43.51" fill="#1f72c4"/><rect x="360.28" y="65.30" width="4" height="60.50" fill="#f97d24"/><rect x="365.38" y="101.23" width="4" height="24.57" fill="#a5a5a5"/><rect x="370.48" y="85.99" width="4" height="39.81" fill="#ffc000"/><line x1="379.46" x2="379.46" y1="125.80000000000001" y2="130" stroke="#bfbfbf" stroke-width="1"/><rect x="383.66" y="81.86" width="4" height="43.94" fill="#1f72c4"/><rect x="388.76" y="64.39" width="4" height="61.41" fill="#f97d24"/><rect x="393.86" y="101.04" width="4" height="24.76" fill="#a5a5a5"/><rect x="398.96" y="85.79" width="4" height="40.01" fill="#ffc000"/><line x1="407.94" x2="407.94" y1="125.80000000000001" y2="130" stroke="#bfbfbf" stroke-width="1"/><rect x="412.14" y="81.42" width="4" height="44.38" fill="#1f72c4"/><rect x="417.24" y="63.47" width="4" height="62.33" fill="#f97d24"/><rect x="422.34" y="100.84" width="4" height="24.96" fill="#a5a5a5"/><rect x="427.44" y="85.59" width="4" height="40.21" fill="#ffc000"/><line x1="436.42" x2="436.42" y1="125.80000000000001" y2="130" stroke="#bfbfbf" stroke-width="1"/><rect x="440.62" y="80.98" width="4" height="44.82" fill="#1f72c4"/><rect x="445.72" y="62.53" width="4" height="63.27" fill="#f97d24"/><rect x="450.82" y="100.64" width="4" height="25.16" fill="#a5a5a5"/><rect x="455.92" y="85.39" width="4" height="40.41" fill="#ffc000"/><rect x="7.600000000000023" y="126.19999999999999" width="480" height="56.5" fill="none" stroke="#a0a0a0" stroke-width="1"/></svg>
<div style="position:absolute;left:295px;top:300px;width:429px;height:287px;overflow:hidden">
<div style="position:absolute;left:53.44px;top:137.00px;width:0;height:0;overflow:visible"><div style="position:absolute;right:0;top:-6px;font-family:'Liberation Sans',sans-serif;font-size:11.6px;line-height:12px;white-space:pre;color:#262626;transform-origin:100% 50%;transform:rotate(-45deg)">01.06.2019</div></div>
<div style="position:absolute;left:81.92px;top:137.00px;width:0;height:0;overflow:visible"><div style="position:absolute;right:0;top:-6px;font-family:'Liberation Sans',sans-serif;font-size:11.6px;line-height:12px;white-space:pre;color:#262626;transform-origin:100% 50%;transform:rotate(-45deg)">02.06.2019</div></div>
<div style="position:absolute;left:110.40px;top:137.00px;width:0;height:0;overflow:visible"><div style="position:absolute;right:0;top:-6px;font-family:'Liberation Sans',sans-serif;font-size:11.6px;line-height:12px;white-space:pre;color:#262626;transform-origin:100% 50%;transform:rotate(-45deg)">03.06.2019</div></div>
<div style="position:absolute;left:138.88px;top:137.00px;width:0;height:0;overflow:visible"><div style="position:absolute;right:0;top:-6px;font-family:'Liberation Sans',sans-serif;font-size:11.6px;line-height:12px;white-space:pre;color:#262626;transform-origin:100% 50%;transform:rotate(-45deg)">04.06.2019</div></div>
<div style="position:absolute;left:167.36px;top:137.00px;width:0;height:0;overflow:visible"><div style="position:absolute;right:0;top:-6px;font-family:'Liberation Sans',sans-serif;font-size:11.6px;line-height:12px;white-space:pre;color:#262626;transform-origin:100% 50%;transform:rotate(-45deg)">05.06.2019</div></div>
<div style="position:absolute;left:195.84px;top:137.00px;width:0;height:0;overflow:visible"><div style="position:absolute;right:0;top:-6px;font-family:'Liberation Sans',sans-serif;font-size:11.6px;line-height:12px;white-space:pre;color:#262626;transform-origin:100% 50%;transform:rotate(-45deg)">06.06.2019</div></div>
<div style="position:absolute;left:224.32px;top:137.00px;width:0;height:0;overflow:visible"><div style="position:absolute;right:0;top:-6px;font-family:'Liberation Sans',sans-serif;font-size:11.6px;line-height:12px;white-space:pre;color:#262626;transform-origin:100% 50%;transform:rotate(-45deg)">07.06.2019</div></div>
<div style="position:absolute;left:252.80px;top:137.00px;width:0;height:0;overflow:visible"><div style="position:absolute;right:0;top:-6px;font-family:'Liberation Sans',sans-serif;font-size:11.6px;line-height:12px;white-space:pre;color:#262626;transform-origin:100% 50%;transform:rotate(-45deg)">08.06.2019</div></div>
<div style="position:absolute;left:281.28px;top:137.00px;width:0;height:0;overflow:visible"><div style="position:absolute;right:0;top:-6px;font-family:'Liberation Sans',sans-serif;font-size:11.6px;line-height:12px;white-space:pre;color:#262626;transform-origin:100% 50%;transform:rotate(-45deg)">09.06.2019</div></div>
<div style="position:absolute;left:309.76px;top:137.00px;width:0;height:0;overflow:visible"><div style="position:absolute;right:0;top:-6px;font-family:'Liberation Sans',sans-serif;font-size:11.6px;line-height:12px;white-space:pre;color:#262626;transform-origin:100% 50%;transform:rotate(-45deg)">10.06.2019</div></div>
<div style="position:absolute;left:338.24px;top:137.00px;width:0;height:0;overflow:visible"><div style="position:absolute;right:0;top:-6px;font-family:'Liberation Sans',sans-serif;font-size:11.6px;line-height:12px;white-space:pre;color:#262626;transform-origin:100% 50%;transform:rotate(-45deg)">11.06.2019</div></div>
<div style="position:absolute;left:366.72px;top:137.00px;width:0;height:0;overflow:visible"><div style="position:absolute;right:0;top:-6px;font-family:'Liberation Sans',sans-serif;font-size:11.6px;line-height:12px;white-space:pre;color:#262626;transform-origin:100% 50%;transform:rotate(-45deg)">12.06.2019</div></div>
<div style="position:absolute;left:395.20px;top:137.00px;width:0;height:0;overflow:visible"><div style="position:absolute;right:0;top:-6px;font-family:'Liberation Sans',sans-serif;font-size:11.6px;line-height:12px;white-space:pre;color:#262626;transform-origin:100% 50%;transform:rotate(-45deg)">13.06.2019</div></div>
<div style="position:absolute;left:423.68px;top:137.00px;width:0;height:0;overflow:visible"><div style="position:absolute;right:0;top:-6px;font-family:'Liberation Sans',sans-serif;font-size:11.6px;line-height:12px;white-space:pre;color:#262626;transform-origin:100% 50%;transform:rotate(-45deg)">14.06.2019</div></div>
<div style="position:absolute;left:452.16px;top:137.00px;width:0;height:0;overflow:visible"><div style="position:absolute;right:0;top:-6px;font-family:'Liberation Sans',sans-serif;font-size:11.6px;line-height:12px;white-space:pre;color:#262626;transform-origin:100% 50%;transform:rotate(-45deg)">15.06.2019</div></div>
</div>
<div style="position:absolute;left:308.75px;top:343.19px;font-family:'Liberation Sans', sans-serif;font-size:11px;line-height:11px;height:11px;font-weight:400;color:#262626;white-space:pre;">50</div>
<div style="position:absolute;left:308.75px;top:358.69px;font-family:'Liberation Sans', sans-serif;font-size:11px;line-height:11px;height:11px;font-weight:400;color:#262626;white-space:pre;">40</div>
<div style="position:absolute;left:308.75px;top:374.19px;font-family:'Liberation Sans', sans-serif;font-size:11px;line-height:11px;height:11px;font-weight:400;color:#262626;white-space:pre;">30</div>
<div style="position:absolute;left:308.75px;top:389.69px;font-family:'Liberation Sans', sans-serif;font-size:11px;line-height:11px;height:11px;font-weight:400;color:#262626;white-space:pre;">20</div>
<div style="position:absolute;left:308.75px;top:405.19px;font-family:'Liberation Sans', sans-serif;font-size:11px;line-height:11px;height:11px;font-weight:400;color:#262626;white-space:pre;">10</div>
<div style="position:absolute;left:314.88px;top:420.49px;font-family:'Liberation Sans', sans-serif;font-size:11px;line-height:11px;height:11px;font-weight:400;color:#262626;white-space:pre;">0</div>
<div style="position:absolute;left:416.25px;top:315.13px;font-family:'Liberation Sans', sans-serif;font-size:15.8px;line-height:15.8px;height:15.8px;font-weight:400;color:#262626;white-space:pre;transform:scaleX(1.0921);transform-origin:0 0;">Продажи по торговым точкам</div>
<div style="position:absolute;left:431px;top:499px;width:6px;height:7px;background:#1f72c4;"></div>
<div style="position:absolute;left:440.50px;top:496.52px;font-family:'Liberation Sans', sans-serif;font-size:11.2px;line-height:11.2px;height:11.2px;font-weight:400;color:#262626;white-space:pre;transform:scaleX(0.9879);transform-origin:0 0;">Продажи по Торговой точке 1, тыс. руб.</div>
<div style="position:absolute;left:431px;top:522px;width:6px;height:7px;background:#f97d24;"></div>
<div style="position:absolute;left:440.50px;top:519.12px;font-family:'Liberation Sans', sans-serif;font-size:11.2px;line-height:11.2px;height:11.2px;font-weight:400;color:#262626;white-space:pre;transform:scaleX(0.9879);transform-origin:0 0;">Продажи по Торговой точке 2, тыс. руб.</div>
<div style="position:absolute;left:431px;top:544px;width:6px;height:7px;background:#a5a5a5;"></div>
<div style="position:absolute;left:440.50px;top:540.92px;font-family:'Liberation Sans', sans-serif;font-size:11.2px;line-height:11.2px;height:11.2px;font-weight:400;color:#262626;white-space:pre;transform:scaleX(0.9879);transform-origin:0 0;">Продажи по Торговой точке 3, тыс. руб.</div>
<div style="position:absolute;left:431px;top:567px;width:6px;height:7px;background:#ffc000;"></div>
<div style="position:absolute;left:440.50px;top:563.82px;font-family:'Liberation Sans', sans-serif;font-size:11.2px;line-height:11.2px;height:11.2px;font-weight:400;color:#262626;white-space:pre;transform:scaleX(0.9879);transform-origin:0 0;">Продажи по Торговой точке 4, тыс. руб.</div>
<svg style="position:absolute;left:289px;top:294px;" width="252" height="300" viewBox="0 0 252 300"><circle cx="6.5" cy="6" r="5" fill="#fff" stroke="#8c8c8c" stroke-width="1.5"/><circle cx="245.5" cy="6" r="5" fill="#fff" stroke="#8c8c8c" stroke-width="1.5"/><circle cx="6.5" cy="149.5" r="5" fill="#fff" stroke="#8c8c8c" stroke-width="1.5"/><circle cx="6.5" cy="293" r="5" fill="#fff" stroke="#8c8c8c" stroke-width="1.5"/><circle cx="245.5" cy="293" r="5" fill="#fff" stroke="#8c8c8c" stroke-width="1.5"/></svg>
<svg style="position:absolute;left:297px;top:420px;" width="12" height="70" viewBox="0 0 12 70"><circle cx="5.600000000000023" cy="6.199999999999989" r="2.6" fill="#fff" stroke="#1aa0e0" stroke-width="1.6"/><circle cx="5.600000000000023" cy="62.69999999999999" r="2.6" fill="#fff" stroke="#1aa0e0" stroke-width="1.6"/></svg>
<div style="position:absolute;left:724px;top:204px;width:4px;height:460px;background:#e6e6e6;"></div>
<div style="position:absolute;left:724px;top:223px;width:1px;height:441px;background:#ababab;"></div>
<div style="position:absolute;left:743px;top:204px;width:323px;height:490px;background:#e6e6e6;"></div>
<div style="position:absolute;left:760.00px;top:221.92px;font-family:'Liberation Sans', sans-serif;font-size:19px;line-height:19px;height:19px;font-weight:400;color:#217346;white-space:pre;transform:scaleX(1.0826);transform-origin:0 0;">Формат оси</div>
<svg style="position:absolute;left:995px;top:224px;" width="12" height="7" viewBox="0 0 12 7"><polygon points="0.5,0.5 10.5,0.5 5.5,6" fill="#7a7a7a"/></svg>
<svg style="position:absolute;left:1036px;top:221px;" width="13" height="13" viewBox="0 0 13 13"><path d="M1.5 1.5 L11.5 11.5 M11.5 1.5 L1.5 11.5" stroke="#7a7a7a" stroke-width="2"/></svg>
<div style="position:absolute;left:765.50px;top:257.02px;font-family:'Liberation Sans', sans-serif;font-size:12.5px;line-height:12.5px;height:12.5px;font-weight:700;color:#262626;white-space:pre;transform:scaleX(0.9267);transform-origin:0 0;">Параметры оси</div>
<svg style="position:absolute;left:862px;top:259px;" width="10" height="7" viewBox="0 0 10 7"><polygon points="0.5,0.5 9.5,0.5 5,6" fill="#7a7a7a"/></svg>
<div style="position:absolute;left:884px;top:255px;width:1px;height:18px;background:#cfcfcf;"></div>
<div style="position:absolute;left:888.50px;top:256.72px;font-family:'Liberation Sans', sans-serif;font-size:12.5px;line-height:12.5px;height:12.5px;font-weight:400;color:#262626;white-space:pre;transform:scaleX(0.9482);transform-origin:0 0;">Параметры текста</div>
<svg style="position:absolute;left:760px;top:315px;" width="290" height="12" viewBox="0 0 290 12"><path d="M0 10.5 H130.8 L137 3 L143.5 10.5 H290" fill="none" stroke="#c6c6c6" stroke-width="1"/></svg>
<svg style="position:absolute;left:764px;top:331px;" width="12" height="14" viewBox="0 0 12 14"><polygon points="10.5,5.5 10.5,11.5 4.5,11.5" fill="#404040"/></svg>
<div style="position:absolute;left:782.00px;top:335.22px;font-family:'Liberation Sans', sans-serif;font-size:12.5px;line-height:12.5px;height:12.5px;font-weight:700;color:#217346;white-space:pre;transform:scaleX(0.9267);transform-origin:0 0;">Параметры оси</div>
<div style="position:absolute;left:782.00px;top:357.62px;font-family:'Liberation Sans', sans-serif;font-size:12.5px;line-height:12.5px;height:12.5px;font-weight:400;color:#262626;white-space:pre;transform:scaleX(0.9775);transform-origin:0 0;">Тип оси</div>
<svg style="position:absolute;left:792px;top:384px;" width="14" height="14" viewBox="0 0 14 14"><circle cx="7" cy="7" r="6" fill="#fff" stroke="#9a9a9a" stroke-width="1"/><circle cx="7" cy="7" r="2.6" fill="#595959"/></svg>
<div style="position:absolute;left:810.30px;top:386.02px;font-family:'Liberation Sans', sans-serif;font-size:12.5px;line-height:12.5px;height:12.5px;font-weight:400;color:#262626;white-space:pre;transform:scaleX(0.9475);transform-origin:0 0;">Автовы<u>б</u>ор на основе данных</div>
<svg style="position:absolute;left:792px;top:406px;" width="14" height="14" viewBox="0 0 14 14"><circle cx="7" cy="7" r="6" fill="#fff" stroke="#9a9a9a" stroke-width="1"/></svg>
<div style="position:absolute;left:810.30px;top:408.02px;font-family:'Liberation Sans', sans-serif;font-size:12.5px;line-height:12.5px;height:12.5px;font-weight:400;color:#262626;white-space:pre;transform:scaleX(0.9138);transform-origin:0 0;">Ось <u>т</u>екста</div>
<svg style="position:absolute;left:792px;top:428px;" width="14" height="14" viewBox="0 0 14 14"><circle cx="7" cy="7" r="6" fill="#fff" stroke="#9a9a9a" stroke-width="1"/></svg>
<div style="position:absolute;left:810.30px;top:429.92px;font-family:'Liberation Sans', sans-serif;font-size:12.5px;line-height:12.5px;height:12.5px;font-weight:400;color:#262626;white-space:pre;transform:scaleX(0.8868);transform-origin:0 0;">О<u>с</u>ь дат</div>
<div style="position:absolute;left:782.00px;top:454.32px;font-family:'Liberation Sans', sans-serif;font-size:12.5px;line-height:12.5px;height:12.5px;font-weight:400;color:#262626;white-space:pre;transform:scaleX(0.9800);transform-origin:0 0;">Границы</div>
<div style="position:absolute;left:792.00px;top:480.22px;font-family:'Liberation Sans', sans-serif;font-size:12.5px;line-height:12.5px;height:12.5px;font-weight:400;color:#262626;white-space:pre;transform:scaleX(1.0231);transform-origin:0 0;"><u>М</u>инимум</div>
<div style="position:absolute;left:792.00px;top:511.22px;font-family:'Liberation Sans', sans-serif;font-size:12.5px;line-height:12.5px;height:12.5px;font-weight:400;color:#262626;white-space:pre;transform:scaleX(1.0118);transform-origin:0 0;"><u>М</u>аксимум</div>
<div style="position:absolute;left:934px;top:474px;width:74px;height:19px;background:#fff;border:1px solid #ababab;box-sizing:border-box;"></div>
<div style="position:absolute;left:934px;top:505px;width:74px;height:19px;background:#fff;border:1px solid #ababab;box-sizing:border-box;"></div>
<div style="position:absolute;left:941.00px;top:478.14px;font-family:'Liberation Sans', sans-serif;font-size:12px;line-height:12px;height:12px;font-weight:400;color:#262626;white-space:pre;transform:scaleX(0.8991);transform-origin:0 0;">01.06.2019</div>
<div style="position:absolute;left:941.00px;top:509.14px;font-family:'Liberation Sans', sans-serif;font-size:12px;line-height:12px;height:12px;font-weight:400;color:#262626;white-space:pre;transform:scaleX(0.8991);transform-origin:0 0;">15.06.2019</div>
<div style="position:absolute;left:1024.00px;top:480.22px;font-family:'Liberation Sans', sans-serif;font-size:12.5px;line-height:12.5px;height:12.5px;font-weight:400;color:#262626;white-space:pre;">Ai</div>
<div style="position:absolute;left:1024.00px;top:511.22px;font-family:'Liberation Sans', sans-serif;font-size:12.5px;line-height:12.5px;height:12.5px;font-weight:400;color:#262626;white-space:pre;">Ai</div>
<div style="position:absolute;left:1024.00px;top:564.02px;font-family:'Liberation Sans', sans-serif;font-size:12.5px;line-height:12.5px;height:12.5px;font-weight:400;color:#262626;white-space:pre;">Ai</div>
<div style="position:absolute;left:1024.00px;top:594.72px;font-family:'Liberation Sans', sans-serif;font-size:12.5px;line-height:12.5px;height:12.5px;font-weight:400;color:#262626;white-space:pre;">Ai</div>
<div style="position:absolute;left:1024.00px;top:626.42px;font-family:'Liberation Sans', sans-serif;font-size:12.5px;line-height:12.5px;height:12.5px;font-weight:400;color:#262626;white-space:pre;">Ai</div>
<div style="position:absolute;left:782.00px;top:538.42px;font-family:'Liberation Sans', sans-serif;font-size:12.5px;line-height:12.5px;height:12.5px;font-weight:400;color:#262626;white-space:pre;transform:scaleX(0.9418);transform-origin:0 0;">Деления</div>
<div style="position:absolute;left:792.00px;top:564.02px;font-family:'Liberation Sans', sans-serif;font-size:12.5px;line-height:12.5px;height:12.5px;font-weight:400;color:#262626;white-space:pre;transform:scaleX(0.9692);transform-origin:0 0;"><u>О</u>сновные</div>
<div style="position:absolute;left:792.00px;top:594.72px;font-family:'Liberation Sans', sans-serif;font-size:12.5px;line-height:12.5px;height:12.5px;font-weight:400;color:#262626;white-space:pre;transform:scaleX(0.9242);transform-origin:0 0;"><u>П</u>ромежуточные</div>
<div style="position:absolute;left:792.00px;top:626.42px;font-family:'Liberation Sans', sans-serif;font-size:12.5px;line-height:12.5px;height:12.5px;font-weight:400;color:#262626;white-space:pre;transform:scaleX(0.9209);transform-origin:0 0;"><u>Б</u>азовая</div>
<div style="position:absolute;left:897px;top:557px;width:26px;height:20px;background:#fff;border:1px solid #ababab;box-sizing:border-box;"></div>
<div style="position:absolute;left:903.00px;top:562.14px;font-family:'Liberation Sans', sans-serif;font-size:12px;line-height:12px;height:12px;font-weight:400;color:#262626;white-space:pre;">1</div>
<div style="position:absolute;left:897px;top:588px;width:26px;height:20px;background:#fff;border:1px solid #ababab;box-sizing:border-box;"></div>
<div style="position:absolute;left:903.00px;top:593.14px;font-family:'Liberation Sans', sans-serif;font-size:12px;line-height:12px;height:12px;font-weight:400;color:#262626;white-space:pre;">1</div>
<div style="position:absolute;left:932px;top:557px;width:76px;height:21px;background:#fbfbfb;border:1px solid #ababab;box-sizing:border-box;"></div>
<div style="position:absolute;left:937.50px;top:563.22px;font-family:'Liberation Sans', sans-serif;font-size:12.5px;line-height:12.5px;height:12.5px;font-weight:400;color:#262626;white-space:pre;transform:scaleX(1.0287);transform-origin:0 0;">Дни</div>
<svg style="position:absolute;left:993px;top:565px;" width="11" height="6" viewBox="0 0 11 6"><polygon points="0.5,0.5 10.5,0.5 5.5,5.5" fill="#8a8a8a"/></svg>
<div style="position:absolute;left:932px;top:588px;width:76px;height:21px;background:#fbfbfb;border:1px solid #ababab;box-sizing:border-box;"></div>
<div style="position:absolute;left:937.50px;top:594.22px;font-family:'Liberation Sans', sans-serif;font-size:12.5px;line-height:12.5px;height:12.5px;font-weight:400;color:#262626;white-space:pre;transform:scaleX(1.0287);transform-origin:0 0;">Дни</div>
<svg style="position:absolute;left:993px;top:596px;" width="11" height="6" viewBox="0 0 11 6"><polygon points="0.5,0.5 10.5,0.5 5.5,5.5" fill="#8a8a8a"/></svg>
<div style="position:absolute;left:932px;top:619px;width:76px;height:21px;background:#fbfbfb;border:1px solid #ababab;box-sizing:border-box;"></div>
<div style="position:absolute;left:937.50px;top:625.22px;font-family:'Liberation Sans', sans-serif;font-size:12.5px;line-height:12.5px;height:12.5px;font-weight:400;color:#262626;white-space:pre;transform:scaleX(1.0287);transform-origin:0 0;">Дни</div>
<svg style="position:absolute;left:993px;top:627px;" width="11" height="6" viewBox="0 0 11 6"><polygon points="0.5,0.5 10.5,0.5 5.5,5.5" fill="#8a8a8a"/></svg>
<div style="position:absolute;left:760px;top:652px;width:277px;height:7px;overflow:hidden"><div style="position:absolute;left:22px;top:1.6px;font-family:'Liberation Sans',sans-serif;font-size:12.5px;line-height:12.5px;color:#262626;white-space:pre;transform:scaleX(0.93);transform-origin:0 0">Вертикальная ось пересекает</div></div>
<div style="position:absolute;left:1037px;top:332px;width:14px;height:324px;background:#dcdcdc;"></div>
<div style="position:absolute;left:1037px;top:332px;width:14px;height:14px;background:#fff;border:1px solid #c6c6c6;box-sizing:border-box;"></div>
<svg style="position:absolute;left:1039px;top:336px;" width="10" height="6" viewBox="0 0 10 6"><polygon points="5,0.5 9,5 1,5" fill="#8a8a8a"/></svg>
<div style="position:absolute;left:1037px;top:346px;width:14px;height:162px;background:#fff;border:1px solid #c6c6c6;box-sizing:border-box;"></div>
<div style="position:absolute;left:1037px;top:641px;width:14px;height:15px;background:#fff;border:1px solid #c6c6c6;box-sizing:border-box;"></div>
<svg style="position:absolute;left:1039px;top:646px;" width="10" height="6" viewBox="0 0 10 6"><polygon points="1,0.5 9,0.5 5,5" fill="#8a8a8a"/></svg>
<div style="position:absolute;left:1051px;top:204px;width:6px;height:489px;background:#e6e6e6;"></div>
<div style="position:absolute;left:762px;top:659px;width:271px;height:15px;background:#dcdcdc;"></div>
<div style="position:absolute;left:762px;top:659px;width:15px;height:15px;background:#fff;border:1px solid #c6c6c6;box-sizing:border-box;"></div>
<svg style="position:absolute;left:766px;top:662px;" width="6" height="9" viewBox="0 0 6 9"><polygon points="5,0.5 5,8.5 0.5,4.5" fill="#8a8a8a"/></svg>
<div style="position:absolute;left:777px;top:659px;width:182px;height:15px;background:#fff;border:1px solid #c6c6c6;box-sizing:border-box;"></div>
<div style="position:absolute;left:1018px;top:659px;width:15px;height:15px;background:#fff;border:1px solid #c6c6c6;box-sizing:border-box;"></div>
<svg style="position:absolute;left:1023px;top:662px;" width="6" height="9" viewBox="0 0 6 9"><polygon points="0.5,0.5 0.5,8.5 5,4.5" fill="#8a8a8a"/></svg>
<div style="position:absolute;left:745px;top:202px;width:316px;height:492px;border:3.3px solid #ff0000;box-sizing:border-box;border-radius:4px;"></div>
<div style="position:absolute;left:1px;top:664px;width:742px;height:30px;background:#e6e6e6;"></div>
<div style="position:absolute;left:1px;top:664px;width:724px;height:1px;background:#a8a8a8;"></div>
<div style="position:absolute;left:101px;top:664px;width:107px;height:25px;background:#fff;"></div>
<div style="position:absolute;left:101px;top:664px;width:1px;height:25px;background:#c6c6c6;"></div>
<div style="position:absolute;left:207px;top:664px;width:1px;height:25px;background:#c6c6c6;"></div>
<div style="position:absolute;left:101px;top:687px;width:107px;height:2.5px;background:#217346;"></div>
<div style="position:absolute;left:113.00px;top:672.50px;font-family:'Liberation Sans', sans-serif;font-size:13px;line-height:13px;height:13px;font-weight:700;color:#217346;white-space:pre;transform:scaleX(0.9935);transform-origin:0 0;">microexcel.ru</div>
<svg style="position:absolute;left:26px;top:673px;" width="40" height="12" viewBox="0 0 40 12"><polygon points="7,1 7,11 2,6" fill="#c4c4c4"/><polygon points="31,1 31,11 36,6" fill="#c4c4c4"/></svg>
<svg style="position:absolute;left:240px;top:670px;" width="18" height="18" viewBox="0 0 18 18"><circle cx="9" cy="9" r="7.8" fill="none" stroke="#8a8a8a" stroke-width="1.4"/><path d="M9 4.5 V13.5 M4.5 9 H13.5" stroke="#8a8a8a" stroke-width="1.6"/></svg>
<svg style="position:absolute;left:446px;top:671px;" width="5" height="17" viewBox="0 0 5 17"><circle cx="2.5" cy="2.5" r="1" fill="#9a9a9a"/><circle cx="2.5" cy="8" r="1" fill="#9a9a9a"/><circle cx="2.5" cy="13.5" r="1" fill="#9a9a9a"/></svg>
<div style="position:absolute;left:466px;top:672px;width:259px;height:15px;background:#dcdcdc;"></div>
<div style="position:absolute;left:466px;top:672px;width:14px;height:15px;background:#fff;border:1px solid #c6c6c6;box-sizing:border-box;"></div>
<svg style="position:absolute;left:469px;top:675px;" width="6" height="9" viewBox="0 0 6 9"><polygon points="5,0.5 5,8.5 0.5,4.5" fill="#8a8a8a"/></svg>
<div style="position:absolute;left:480px;top:672px;width:172px;height:15px;background:#fff;border:1px solid #c6c6c6;box-sizing:border-box;"></div>
<div style="position:absolute;left:710px;top:672px;width:15px;height:15px;background:#fff;border:1px solid #c6c6c6;box-sizing:border-box;"></div>
<svg style="position:absolute;left:715px;top:675px;" width="6" height="9" viewBox="0 0 6 9"><polygon points="0.5,0.5 0.5,8.5 5,4.5" fill="#8a8a8a"/></svg>
<div style="position:absolute;left:1px;top:694px;width:1065px;height:21px;background:#f3f3f3;"></div>
<div style="position:absolute;left:1px;top:693px;width:744px;height:1px;background:#d6d6d6;"></div>
<div style="position:absolute;left:743px;top:693px;width:323px;height:1px;background:#e6e6e6;"></div>
<div style="position:absolute;left:766px;top:694px;width:38px;height:21px;background:#d0d0d0;"></div>
<svg style="position:absolute;left:22px;top:10px;" width="17" height="16" viewBox="0 0 17 16"><path d="M1.8 1.8 H14.2 V14.2 H1.8 Z" fill="none" stroke="#fff" stroke-width="1.7"/><path d="M1.8 9.3 H14.2" stroke="#fff" stroke-width="1.5"/><path d="M5.5 14.2 V9.3 H10 V14.2" fill="none" stroke="#fff" stroke-width="1.4"/></svg>
<svg style="position:absolute;left:50px;top:10px;" width="18" height="15" viewBox="0 0 18 15"><path d="M2.5 5.8 H9.5 A4.6 4.6 0 0 1 9.5 13 H8" fill="none" stroke="#fff" stroke-width="2"/><path d="M6.3 1.8 L2.3 5.8 L6.3 9.8" fill="none" stroke="#fff" stroke-width="2"/></svg>
<svg style="position:absolute;left:70px;top:15px;" width="7" height="5" viewBox="0 0 7 5"><polygon points="0.5,0.5 6.5,0.5 3.5,4" fill="#fff"/></svg>
<svg style="position:absolute;left:85px;top:10px;" width="18" height="15" viewBox="0 0 18 15"><path d="M15.5 5.8 H8.5 A4.6 4.6 0 0 0 8.5 13 H10" fill="none" stroke="#35a070" stroke-width="2"/><path d="M11.7 1.8 L15.7 5.8 L11.7 9.8" fill="none" stroke="#35a070" stroke-width="2"/></svg>
<svg style="position:absolute;left:105px;top:15px;" width="7" height="5" viewBox="0 0 7 5"><polygon points="0.5,0.5 6.5,0.5 3.5,4" fill="#3d9c6c"/></svg>
<svg style="position:absolute;left:123px;top:12px;" width="11" height="10" viewBox="0 0 11 10"><path d="M1.5 2 H9.7" stroke="#fff" stroke-width="1.2"/><path d="M2 4.5 L5.6 8.3 L9.2 4.5" fill="none" stroke="#fff" stroke-width="1.1"/></svg>
<svg style="position:absolute;left:897px;top:10px;" width="15" height="12" viewBox="0 0 15 12"><rect x="1.5" y="1.5" width="12" height="9.5" fill="none" stroke="#fff" stroke-width="1.2"/><path d="M1.5 2.6 H13.5" stroke="#fff" stroke-width="1.5"/><path d="M7.5 10.5 V5 M5.3 7 L7.5 4.8 L9.7 7" fill="none" stroke="#fff" stroke-width="1.1"/></svg>
<div style="position:absolute;left:946px;top:16px;width:10px;height:1.2px;background:#fff;"></div>
<svg style="position:absolute;left:991px;top:10px;" width="12" height="12" viewBox="0 0 12 12"><rect x="1.5" y="1.5" width="9" height="9" fill="none" stroke="#fff" stroke-width="1"/></svg>
<svg style="position:absolute;left:1037px;top:10px;" width="12" height="12" viewBox="0 0 12 12"><path d="M1 1 L11 11 M11 1 L1 11" stroke="#fff" stroke-width="1.2"/></svg>
<svg style="position:absolute;left:860px;top:42px;" width="15" height="17" viewBox="0 0 15 17"><path d="M4.5 11.5 C4.5 9 2 8 2 5.8 A5.5 5.5 0 0 1 13 5.8 C13 8 10.5 9 10.5 11.5 Z" fill="none" stroke="#fff" stroke-width="1.2"/><path d="M5 13.3 H10 M5.8 15.3 H9.2" stroke="#fff" stroke-width="1.2"/></svg>
<svg style="position:absolute;left:956px;top:41px;" width="18" height="19" viewBox="0 0 18 19"><circle cx="9.5" cy="5" r="3.8" fill="none" stroke="#fff" stroke-width="1.2"/><path d="M1.5 17 C2.5 12 6 9.5 9.5 9.5 C11 9.5 12 9.8 13 10.3" fill="none" stroke="#fff" stroke-width="1.2"/><path d="M13.5 11 V17.5 M10.3 14.2 H16.8" stroke="#fff" stroke-width="1.3"/></svg>
<svg style="position:absolute;left:48px;top:72px;" width="32" height="33" viewBox="0 0 32 33"><rect x="2" y="10" width="7" height="17.7" fill="#1a6dc4"/>
<rect x="10" y="2" width="7" height="25.7" fill="#f8c98a"/><circle cx="13.5" cy="8" r="0.7" fill="#ffc000"/><circle cx="14.5" cy="14" r="0.7" fill="#ffc000"/>
<path d="M18 7 H25 V17.5 H22 V21.5 H18 Z" fill="#8c8c8c"/>
<path d="M22 19 H26 V23 H30 V27 H26 V31 H22 V27 H18 V23 H22 Z" fill="#72b89a"/></svg>
<svg style="position:absolute;left:128px;top:70px;" width="34" height="34" viewBox="0 0 34 34"><rect x="1.5" y="1.5" width="31" height="31" fill="#fff" stroke="#9a9a9a" stroke-width="1.3"/>
<path d="M7 6.2 H22.8" stroke="#aaa" stroke-width="1.6"/>
<rect x="6.3" y="9.3" width="18.4" height="16.2" fill="none" stroke="#9a9a9a" stroke-width="1"/>
<path d="M6.3 13.5 H24.7 M6.3 17.5 H24.7 M6.3 21.5 H24.7" stroke="#bbb" stroke-width="0.8"/>
<rect x="8.3" y="16.5" width="3" height="9" fill="#fff" stroke="#9a9a9a" stroke-width="1"/>
<rect x="11.8" y="12.5" width="3" height="13" fill="#ddd" stroke="#9a9a9a" stroke-width="1"/>
<rect x="16.3" y="15.5" width="3" height="10" fill="#fff" stroke="#9a9a9a" stroke-width="1"/>
<rect x="19.8" y="19.5" width="3" height="6" fill="#ddd" stroke="#9a9a9a" stroke-width="1"/>
<path d="M6.3 25.5 H24.7" stroke="#8a8a8a" stroke-width="1.3"/>
<rect x="26.5" y="11.5" width="4" height="8" fill="#fff" stroke="#9a9a9a" stroke-width="1.2"/>
<circle cx="28.5" cy="13.5" r="0.6" fill="#888"/><circle cx="28.5" cy="15.5" r="0.6" fill="#888"/><circle cx="28.5" cy="17.5" r="0.6" fill="#888"/>
<path d="M3 12.5 H5 M3 16.5 H5 M3 20.5 H5 M3 24.5 H5 M9 28.5 H13 M18 28.5 H22" stroke="#aaa" stroke-width="1"/></svg>
<svg style="position:absolute;left:93px;top:128px;" width="6" height="4" viewBox="0 0 6 4"><polygon points="0,0 6,0 3,3.5" fill="#5a5a5a"/></svg>
<svg style="position:absolute;left:159px;top:128px;" width="6" height="4" viewBox="0 0 6 4"><polygon points="0,0 6,0 3,3.5" fill="#5a5a5a"/></svg>
<svg style="position:absolute;left:235px;top:128px;" width="6" height="4" viewBox="0 0 6 4"><polygon points="0,0 6,0 3,3.5" fill="#5a5a5a"/></svg>
<svg style="position:absolute;left:205px;top:72px;" width="32" height="29" viewBox="0 0 32 29"><circle cx="10" cy="5.8" r="4" fill="#f9c98d"/><circle cx="22" cy="5.8" r="4" fill="#1f8f5f"/><circle cx="6" cy="16.9" r="4" fill="#f56a20"/><circle cx="25.9" cy="16.9" r="4" fill="#1a6fc4"/><circle cx="16" cy="23.9" r="4" fill="#f97d24"/></svg>
<svg style="position:absolute;left:252px;top:71px;" width="444" height="61" viewBox="0 0 444 61"><rect x="0.00" y="0.00" width="443.00" height="60.00" fill="#fff" fill-opacity="1"/><rect x="0.5" y="0.5" width="442" height="59" fill="none" stroke="#d4d4d4"/><rect x="0.80" y="2.20" width="88.10" height="55.50" fill="#c6c6c6" fill-opacity="1"/><rect x="5.00" y="5.90" width="80.20" height="48.10" fill="#fff" fill-opacity="1"/><rect x="31.30" y="9.00" width="27.70" height="1.80" fill="#8a8a8a" fill-opacity="0.8"/><rect x="8.00" y="14.00" width="2.60" height="0.90" fill="#aaa" fill-opacity="0.7"/><rect x="8.00" y="17.60" width="2.60" height="0.90" fill="#aaa" fill-opacity="0.7"/><rect x="8.00" y="21.20" width="2.60" height="0.90" fill="#aaa" fill-opacity="0.7"/><rect x="8.00" y="24.80" width="2.60" height="0.90" fill="#aaa" fill-opacity="0.7"/><rect x="12.00" y="19.00" width="0.90" height="8.00" fill="#4aa383" fill-opacity="1"/><rect x="13.00" y="16.00" width="1.60" height="11.00" fill="#f9c98d" fill-opacity="1"/><rect x="14.70" y="21.00" width="0.90" height="6.00" fill="#c8c8c8" fill-opacity="1"/><rect x="15.60" y="18.50" width="0.90" height="8.50" fill="#ffc000" fill-opacity="0.8"/><rect x="16.70" y="19.00" width="0.90" height="8.00" fill="#4aa383" fill-opacity="1"/><rect x="17.70" y="16.50" width="1.60" height="11.00" fill="#f9c98d" fill-opacity="1"/><rect x="19.40" y="21.00" width="0.90" height="6.00" fill="#c8c8c8" fill-opacity="1"/><rect x="20.30" y="18.50" width="0.90" height="8.50" fill="#ffc000" fill-opacity="0.8"/><rect x="21.40" y="19.00" width="0.90" height="8.00" fill="#4aa383" fill-opacity="1"/><rect x="22.40" y="17.00" width="1.60" height="11.00" fill="#f9c98d" fill-opacity="1"/><rect x="24.10" y="21.00" width="0.90" height="6.00" fill="#c8c8c8" fill-opacity="1"/><rect x="25.00" y="18.50" width="0.90" height="8.50" fill="#ffc000" fill-opacity="0.8"/><rect x="26.10" y="19.00" width="0.90" height="8.00" fill="#4aa383" fill-opacity="1"/><rect x="27.10" y="16.00" width="1.60" height="11.00" fill="#f9c98d" fill-opacity="1"/><rect x="28.80" y="21.00" width="0.90" height="6.00" fill="#c8c8c8" fill-opacity="1"/><rect x="29.70" y="18.50" width="0.90" height="8.50" fill="#ffc000" fill-opacity="0.8"/><rect x="30.80" y="19.00" width="0.90" height="8.00" fill="#4aa383" fill-opacity="1"/><rect x="31.80" y="16.50" width="1.60" height="11.00" fill="#f9c98d" fill-opacity="1"/><rect x="33.50" y="21.00" width="0.90" height="6.00" fill="#c8c8c8" fill-opacity="1"/><rect x="34.40" y="18.50" width="0.90" height="8.50" fill="#ffc000" fill-opacity="0.8"/><rect x="35.50" y="19.00" width="0.90" height="8.00" fill="#4aa383" fill-opacity="1"/><rect x="36.50" y="17.00" width="1.60" height="11.00" fill="#f9c98d" fill-opacity="1"/><rect x="38.20" y="21.00" width="0.90" height="6.00" fill="#c8c8c8" fill-opacity="1"/><rect x="39.10" y="18.50" width="0.90" height="8.50" fill="#ffc000" fill-opacity="0.8"/><rect x="40.20" y="19.00" width="0.90" height="8.00" fill="#4aa383" fill-opacity="1"/><rect x="41.20" y="16.00" width="1.60" height="11.00" fill="#f9c98d" fill-opacity="1"/><rect x="42.90" y="21.00" width="0.90" height="6.00" fill="#c8c8c8" fill-opacity="1"/><rect x="43.80" y="18.50" width="0.90" height="8.50" fill="#ffc000" fill-opacity="0.8"/><rect x="44.90" y="19.00" width="0.90" height="8.00" fill="#4aa383" fill-opacity="1"/><rect x="45.90" y="16.50" width="1.60" height="11.00" fill="#f9c98d" fill-opacity="1"/><rect x="47.60" y="21.00" width="0.90" height="6.00" fill="#c8c8c8" fill-opacity="1"/><rect x="48.50" y="18.50" width="0.90" height="8.50" fill="#ffc000" fill-opacity="0.8"/><rect x="49.60" y="19.00" width="0.90" height="8.00" fill="#4aa383" fill-opacity="1"/><rect x="50.60" y="17.00" width="1.60" height="11.00" fill="#f9c98d" fill-opacity="1"/><rect x="52.30" y="21.00" width="0.90" height="6.00" fill="#c8c8c8" fill-opacity="1"/><rect x="53.20" y="18.50" width="0.90" height="8.50" fill="#ffc000" fill-opacity="0.8"/><rect x="54.30" y="19.00" width="0.90" height="8.00" fill="#4aa383" fill-opacity="1"/><rect x="55.30" y="16.00" width="1.60" height="11.00" fill="#f9c98d" fill-opacity="1"/><rect x="57.00" y="21.00" width="0.90" height="6.00" fill="#c8c8c8" fill-opacity="1"/><rect x="57.90" y="18.50" width="0.90" height="8.50" fill="#ffc000" fill-opacity="0.8"/><rect x="59.00" y="19.00" width="0.90" height="8.00" fill="#4aa383" fill-opacity="1"/><rect x="60.00" y="16.50" width="1.60" height="11.00" fill="#f9c98d" fill-opacity="1"/><rect x="61.70" y="21.00" width="0.90" height="6.00" fill="#c8c8c8" fill-opacity="1"/><rect x="62.60" y="18.50" width="0.90" height="8.50" fill="#ffc000" fill-opacity="0.8"/><rect x="63.70" y="19.00" width="0.90" height="8.00" fill="#4aa383" fill-opacity="1"/><rect x="64.70" y="17.00" width="1.60" height="11.00" fill="#f9c98d" fill-opacity="1"/><rect x="66.40" y="21.00" width="0.90" height="6.00" fill="#c8c8c8" fill-opacity="1"/><rect x="67.30" y="18.50" width="0.90" height="8.50" fill="#ffc000" fill-opacity="0.8"/><rect x="68.40" y="19.00" width="0.90" height="8.00" fill="#4aa383" fill-opacity="1"/><rect x="69.40" y="16.00" width="1.60" height="11.00" fill="#f9c98d" fill-opacity="1"/><rect x="71.10" y="21.00" width="0.90" height="6.00" fill="#c8c8c8" fill-opacity="1"/><rect x="72.00" y="18.50" width="0.90" height="8.50" fill="#ffc000" fill-opacity="0.8"/><rect x="73.10" y="19.00" width="0.90" height="8.00" fill="#4aa383" fill-opacity="1"/><rect x="74.10" y="16.50" width="1.60" height="11.00" fill="#f9c98d" fill-opacity="1"/><rect x="75.80" y="21.00" width="0.90" height="6.00" fill="#c8c8c8" fill-opacity="1"/><rect x="76.70" y="18.50" width="0.90" height="8.50" fill="#ffc000" fill-opacity="0.8"/><rect x="77.80" y="19.00" width="0.90" height="8.00" fill="#4aa383" fill-opacity="1"/><rect x="78.80" y="17.00" width="1.60" height="11.00" fill="#f9c98d" fill-opacity="1"/><rect x="80.50" y="21.00" width="0.90" height="6.00" fill="#c8c8c8" fill-opacity="1"/><rect x="81.40" y="18.50" width="0.90" height="8.50" fill="#ffc000" fill-opacity="0.8"/><line x1="7.00" y1="35.50" x2="13.30" y2="28.50" stroke="#8a8a8a" stroke-width="0.9" stroke-opacity="0.8"/><line x1="11.67" y1="35.50" x2="17.97" y2="28.50" stroke="#8a8a8a" stroke-width="0.9" stroke-opacity="0.8"/><line x1="16.33" y1="35.50" x2="22.63" y2="28.50" stroke="#8a8a8a" stroke-width="0.9" stroke-opacity="0.8"/><line x1="21.00" y1="35.50" x2="27.30" y2="28.50" stroke="#8a8a8a" stroke-width="0.9" stroke-opacity="0.8"/><line x1="25.67" y1="35.50" x2="31.97" y2="28.50" stroke="#8a8a8a" stroke-width="0.9" stroke-opacity="0.8"/><line x1="30.33" y1="35.50" x2="36.63" y2="28.50" stroke="#8a8a8a" stroke-width="0.9" stroke-opacity="0.8"/><line x1="35.00" y1="35.50" x2="41.30" y2="28.50" stroke="#8a8a8a" stroke-width="0.9" stroke-opacity="0.8"/><line x1="39.67" y1="35.50" x2="45.97" y2="28.50" stroke="#8a8a8a" stroke-width="0.9" stroke-opacity="0.8"/><line x1="44.33" y1="35.50" x2="50.63" y2="28.50" stroke="#8a8a8a" stroke-width="0.9" stroke-opacity="0.8"/><line x1="49.00" y1="35.50" x2="55.30" y2="28.50" stroke="#8a8a8a" stroke-width="0.9" stroke-opacity="0.8"/><line x1="53.67" y1="35.50" x2="59.97" y2="28.50" stroke="#8a8a8a" stroke-width="0.9" stroke-opacity="0.8"/><line x1="58.33" y1="35.50" x2="64.63" y2="28.50" stroke="#8a8a8a" stroke-width="0.9" stroke-opacity="0.8"/><line x1="63.00" y1="35.50" x2="69.30" y2="28.50" stroke="#8a8a8a" stroke-width="0.9" stroke-opacity="0.8"/><line x1="67.67" y1="35.50" x2="73.97" y2="28.50" stroke="#8a8a8a" stroke-width="0.9" stroke-opacity="0.8"/><line x1="72.33" y1="35.50" x2="78.63" y2="28.50" stroke="#8a8a8a" stroke-width="0.9" stroke-opacity="0.8"/><rect x="28.00" y="38.70" width="1.30" height="1.30" fill="#3a9f7a" fill-opacity="1"/><rect x="29.80" y="38.80" width="33.20" height="1.00" fill="#9a9a9a" fill-opacity="0.5"/><rect x="28.00" y="42.60" width="1.30" height="1.30" fill="#f9c98d" fill-opacity="1"/><rect x="29.80" y="42.70" width="33.20" height="1.00" fill="#9a9a9a" fill-opacity="0.5"/><rect x="28.00" y="46.60" width="1.30" height="1.30" fill="#c8c8c8" fill-opacity="1"/><rect x="29.80" y="46.70" width="33.20" height="1.00" fill="#9a9a9a" fill-opacity="0.5"/><rect x="28.00" y="50.60" width="1.30" height="1.30" fill="#ffc000" fill-opacity="1"/><rect x="29.80" y="50.70" width="33.20" height="1.00" fill="#9a9a9a" fill-opacity="0.5"/><rect x="93.00" y="5.00" width="79.00" height="52.00" fill="none" stroke="#d8d8d8" stroke-width="0.8" stroke-dasharray="0.8 2.6"/><rect x="110.80" y="8.60" width="44.20" height="2.20" fill="#6a6a6a" fill-opacity="0.7"/><rect x="115.80" y="14.70" width="1.30" height="1.30" fill="#1a6dc4" fill-opacity="1"/><rect x="117.60" y="14.80" width="33.20" height="1.00" fill="#9a9a9a" fill-opacity="0.5"/><rect x="115.80" y="18.70" width="1.30" height="1.30" fill="#f9c98d" fill-opacity="1"/><rect x="117.60" y="18.80" width="33.20" height="1.00" fill="#9a9a9a" fill-opacity="0.5"/><rect x="115.80" y="22.80" width="1.30" height="1.30" fill="#ddd" fill-opacity="1"/><rect x="117.60" y="22.90" width="33.20" height="1.00" fill="#9a9a9a" fill-opacity="0.5"/><rect x="115.80" y="26.20" width="1.30" height="1.30" fill="#ffc000" fill-opacity="1"/><rect x="117.60" y="26.30" width="33.20" height="1.00" fill="#9a9a9a" fill-opacity="0.5"/><rect x="101.00" y="28.00" width="3.20" height="7.50" fill="#a8a8a8" fill-opacity="0.6"/><rect x="101.50" y="35.50" width="3.00" height="6.50" fill="#f9c98d" fill-opacity="1"/><rect x="105.60" y="28.00" width="3.20" height="7.50" fill="#a8a8a8" fill-opacity="0.6"/><rect x="106.10" y="35.50" width="3.00" height="6.50" fill="#f9c98d" fill-opacity="1"/><rect x="110.20" y="28.00" width="3.20" height="7.50" fill="#a8a8a8" fill-opacity="0.6"/><rect x="110.70" y="35.50" width="3.00" height="6.50" fill="#f9c98d" fill-opacity="1"/><rect x="114.80" y="28.00" width="3.20" height="7.50" fill="#a8a8a8" fill-opacity="0.6"/><rect x="115.30" y="35.50" width="3.00" height="6.50" fill="#f9c98d" fill-opacity="1"/><rect x="119.40" y="28.00" width="3.20" height="7.50" fill="#a8a8a8" fill-opacity="0.6"/><rect x="119.90" y="35.50" width="3.00" height="6.50" fill="#f9c98d" fill-opacity="1"/><rect x="124.00" y="28.00" width="3.20" height="7.50" fill="#a8a8a8" fill-opacity="0.6"/><rect x="124.50" y="35.50" width="3.00" height="6.50" fill="#f9c98d" fill-opacity="1"/><rect x="128.60" y="28.00" width="3.20" height="7.50" fill="#a8a8a8" fill-opacity="0.6"/><rect x="129.10" y="35.50" width="3.00" height="6.50" fill="#f9c98d" fill-opacity="1"/><rect x="133.20" y="28.00" width="3.20" height="7.50" fill="#a8a8a8" fill-opacity="0.6"/><rect x="133.70" y="35.50" width="3.00" height="6.50" fill="#f9c98d" fill-opacity="1"/><rect x="137.80" y="28.00" width="3.20" height="7.50" fill="#a8a8a8" fill-opacity="0.6"/><rect x="138.30" y="35.50" width="3.00" height="6.50" fill="#f9c98d" fill-opacity="1"/><rect x="142.40" y="28.00" width="3.20" height="7.50" fill="#a8a8a8" fill-opacity="0.6"/><rect x="142.90" y="35.50" width="3.00" height="6.50" fill="#f9c98d" fill-opacity="1"/><rect x="147.00" y="28.00" width="3.20" height="7.50" fill="#a8a8a8" fill-opacity="0.6"/><rect x="147.50" y="35.50" width="3.00" height="6.50" fill="#f9c98d" fill-opacity="1"/><rect x="151.60" y="28.00" width="3.20" height="7.50" fill="#a8a8a8" fill-opacity="0.6"/><rect x="152.10" y="35.50" width="3.00" height="6.50" fill="#f9c98d" fill-opacity="1"/><rect x="156.20" y="28.00" width="3.20" height="7.50" fill="#a8a8a8" fill-opacity="0.6"/><rect x="156.70" y="35.50" width="3.00" height="6.50" fill="#f9c98d" fill-opacity="1"/><rect x="160.80" y="28.00" width="3.20" height="7.50" fill="#a8a8a8" fill-opacity="0.6"/><rect x="161.30" y="35.50" width="3.00" height="6.50" fill="#f9c98d" fill-opacity="1"/><rect x="165.40" y="28.00" width="3.20" height="7.50" fill="#a8a8a8" fill-opacity="0.6"/><rect x="165.90" y="35.50" width="3.00" height="6.50" fill="#f9c98d" fill-opacity="1"/><line x1="95.00" y1="52.00" x2="103.10" y2="43.00" stroke="#9a9a9a" stroke-width="0.9" stroke-opacity="0.7"/><line x1="99.40" y1="52.00" x2="107.50" y2="43.00" stroke="#9a9a9a" stroke-width="0.9" stroke-opacity="0.7"/><line x1="103.80" y1="52.00" x2="111.90" y2="43.00" stroke="#9a9a9a" stroke-width="0.9" stroke-opacity="0.7"/><line x1="108.20" y1="52.00" x2="116.30" y2="43.00" stroke="#9a9a9a" stroke-width="0.9" stroke-opacity="0.7"/><line x1="112.60" y1="52.00" x2="120.70" y2="43.00" stroke="#9a9a9a" stroke-width="0.9" stroke-opacity="0.7"/><line x1="117.00" y1="52.00" x2="125.10" y2="43.00" stroke="#9a9a9a" stroke-width="0.9" stroke-opacity="0.7"/><line x1="121.40" y1="52.00" x2="129.50" y2="43.00" stroke="#9a9a9a" stroke-width="0.9" stroke-opacity="0.7"/><line x1="125.80" y1="52.00" x2="133.90" y2="43.00" stroke="#9a9a9a" stroke-width="0.9" stroke-opacity="0.7"/><line x1="130.20" y1="52.00" x2="138.30" y2="43.00" stroke="#9a9a9a" stroke-width="0.9" stroke-opacity="0.7"/><line x1="134.60" y1="52.00" x2="142.70" y2="43.00" stroke="#9a9a9a" stroke-width="0.9" stroke-opacity="0.7"/><line x1="139.00" y1="52.00" x2="147.10" y2="43.00" stroke="#9a9a9a" stroke-width="0.9" stroke-opacity="0.7"/><line x1="143.40" y1="52.00" x2="151.50" y2="43.00" stroke="#9a9a9a" stroke-width="0.9" stroke-opacity="0.7"/><line x1="147.80" y1="52.00" x2="155.90" y2="43.00" stroke="#9a9a9a" stroke-width="0.9" stroke-opacity="0.7"/><line x1="152.20" y1="52.00" x2="160.30" y2="43.00" stroke="#9a9a9a" stroke-width="0.9" stroke-opacity="0.7"/><line x1="156.60" y1="52.00" x2="164.70" y2="43.00" stroke="#9a9a9a" stroke-width="0.9" stroke-opacity="0.7"/><rect x="181.00" y="5.00" width="80.00" height="52.00" fill="none" stroke="#d8d8d8" stroke-width="0.8" stroke-dasharray="0.8 2.6"/><rect x="196.20" y="9.30" width="49.80" height="2.20" fill="#7a7a7a" fill-opacity="0.65"/><rect x="203.80" y="15.70" width="1.30" height="1.30" fill="#3a9f7a" fill-opacity="1"/><rect x="205.60" y="15.80" width="33.20" height="1.00" fill="#9a9a9a" fill-opacity="0.5"/><rect x="203.80" y="18.90" width="1.30" height="1.30" fill="#f9c98d" fill-opacity="1"/><rect x="205.60" y="19.00" width="33.20" height="1.00" fill="#9a9a9a" fill-opacity="0.5"/><rect x="203.80" y="22.70" width="1.30" height="1.30" fill="#c8c8c8" fill-opacity="1"/><rect x="205.60" y="22.80" width="33.20" height="1.00" fill="#9a9a9a" fill-opacity="0.5"/><rect x="203.80" y="26.70" width="1.30" height="1.30" fill="#ffc000" fill-opacity="1"/><rect x="205.60" y="26.80" width="33.20" height="1.00" fill="#9a9a9a" fill-opacity="0.5"/><rect x="184.00" y="31.00" width="2.60" height="0.90" fill="#aaa" fill-opacity="0.7"/><rect x="184.00" y="34.20" width="2.60" height="0.90" fill="#aaa" fill-opacity="0.7"/><rect x="184.00" y="37.40" width="2.60" height="0.90" fill="#aaa" fill-opacity="0.7"/><rect x="184.00" y="40.60" width="2.60" height="0.90" fill="#aaa" fill-opacity="0.7"/><rect x="188.00" y="35.00" width="1.00" height="8.00" fill="#b8c4d0" fill-opacity="1"/><rect x="189.10" y="33.00" width="1.60" height="10.00" fill="#f9c98d" fill-opacity="1"/><rect x="190.80" y="37.00" width="1.00" height="6.00" fill="#ffc000" fill-opacity="0.9"/><rect x="192.67" y="35.00" width="1.00" height="8.00" fill="#b8c4d0" fill-opacity="1"/><rect x="193.77" y="33.00" width="1.60" height="10.00" fill="#f9c98d" fill-opacity="1"/><rect x="195.47" y="37.00" width="1.00" height="6.00" fill="#ffc000" fill-opacity="0.9"/><rect x="197.34" y="35.00" width="1.00" height="8.00" fill="#b8c4d0" fill-opacity="1"/><rect x="198.44" y="33.00" width="1.60" height="10.00" fill="#f9c98d" fill-opacity="1"/><rect x="200.14" y="37.00" width="1.00" height="6.00" fill="#ffc000" fill-opacity="0.9"/><rect x="202.01" y="35.00" width="1.00" height="8.00" fill="#4a78a8" fill-opacity="1"/><rect x="203.11" y="33.00" width="1.60" height="10.00" fill="#f9c98d" fill-opacity="1"/><rect x="204.81" y="37.00" width="1.00" height="6.00" fill="#ffc000" fill-opacity="0.9"/><rect x="206.68" y="35.00" width="1.00" height="8.00" fill="#b8c4d0" fill-opacity="1"/><rect x="207.78" y="33.00" width="1.60" height="10.00" fill="#f9c98d" fill-opacity="1"/><rect x="209.48" y="37.00" width="1.00" height="6.00" fill="#ffc000" fill-opacity="0.9"/><rect x="211.35" y="35.00" width="1.00" height="8.00" fill="#b8c4d0" fill-opacity="1"/><rect x="212.45" y="33.00" width="1.60" height="10.00" fill="#f9c98d" fill-opacity="1"/><rect x="214.15" y="37.00" width="1.00" height="6.00" fill="#ffc000" fill-opacity="0.9"/><rect x="216.02" y="35.00" width="1.00" height="8.00" fill="#b8c4d0" fill-opacity="1"/><rect x="217.12" y="33.00" width="1.60" height="10.00" fill="#f9c98d" fill-opacity="1"/><rect x="218.82" y="37.00" width="1.00" height="6.00" fill="#ffc000" fill-opacity="0.9"/><rect x="220.69" y="35.00" width="1.00" height="8.00" fill="#4a78a8" fill-opacity="1"/><rect x="221.79" y="33.00" width="1.60" height="10.00" fill="#f9c98d" fill-opacity="1"/><rect x="223.49" y="37.00" width="1.00" height="6.00" fill="#ffc000" fill-opacity="0.9"/><rect x="225.36" y="35.00" width="1.00" height="8.00" fill="#b8c4d0" fill-opacity="1"/><rect x="226.46" y="33.00" width="1.60" height="10.00" fill="#f9c98d" fill-opacity="1"/><rect x="228.16" y="37.00" width="1.00" height="6.00" fill="#ffc000" fill-opacity="0.9"/><rect x="230.03" y="35.00" width="1.00" height="8.00" fill="#b8c4d0" fill-opacity="1"/><rect x="231.13" y="33.00" width="1.60" height="10.00" fill="#f9c98d" fill-opacity="1"/><rect x="232.83" y="37.00" width="1.00" height="6.00" fill="#ffc000" fill-opacity="0.9"/><rect x="234.70" y="35.00" width="1.00" height="8.00" fill="#b8c4d0" fill-opacity="1"/><rect x="235.80" y="33.00" width="1.60" height="10.00" fill="#f9c98d" fill-opacity="1"/><rect x="237.50" y="37.00" width="1.00" height="6.00" fill="#ffc000" fill-opacity="0.9"/><rect x="239.37" y="35.00" width="1.00" height="8.00" fill="#4a78a8" fill-opacity="1"/><rect x="240.47" y="33.00" width="1.60" height="10.00" fill="#f9c98d" fill-opacity="1"/><rect x="242.17" y="37.00" width="1.00" height="6.00" fill="#ffc000" fill-opacity="0.9"/><rect x="244.04" y="35.00" width="1.00" height="8.00" fill="#b8c4d0" fill-opacity="1"/><rect x="245.14" y="33.00" width="1.60" height="10.00" fill="#f9c98d" fill-opacity="1"/><rect x="246.84" y="37.00" width="1.00" height="6.00" fill="#ffc000" fill-opacity="0.9"/><rect x="248.71" y="35.00" width="1.00" height="8.00" fill="#b8c4d0" fill-opacity="1"/><rect x="249.81" y="33.00" width="1.60" height="10.00" fill="#f9c98d" fill-opacity="1"/><rect x="251.51" y="37.00" width="1.00" height="6.00" fill="#ffc000" fill-opacity="0.9"/><rect x="253.38" y="35.00" width="1.00" height="8.00" fill="#b8c4d0" fill-opacity="1"/><rect x="254.48" y="33.00" width="1.60" height="10.00" fill="#f9c98d" fill-opacity="1"/><rect x="256.18" y="37.00" width="1.00" height="6.00" fill="#ffc000" fill-opacity="0.9"/><line x1="183.00" y1="52.00" x2="189.30" y2="45.00" stroke="#9a9a9a" stroke-width="0.9" stroke-opacity="0.7"/><line x1="187.40" y1="52.00" x2="193.70" y2="45.00" stroke="#9a9a9a" stroke-width="0.9" stroke-opacity="0.7"/><line x1="191.80" y1="52.00" x2="198.10" y2="45.00" stroke="#9a9a9a" stroke-width="0.9" stroke-opacity="0.7"/><line x1="196.20" y1="52.00" x2="202.50" y2="45.00" stroke="#9a9a9a" stroke-width="0.9" stroke-opacity="0.7"/><line x1="200.60" y1="52.00" x2="206.90" y2="45.00" stroke="#9a9a9a" stroke-width="0.9" stroke-opacity="0.7"/><line x1="205.00" y1="52.00" x2="211.30" y2="45.00" stroke="#9a9a9a" stroke-width="0.9" stroke-opacity="0.7"/><line x1="209.40" y1="52.00" x2="215.70" y2="45.00" stroke="#9a9a9a" stroke-width="0.9" stroke-opacity="0.7"/><line x1="213.80" y1="52.00" x2="220.10" y2="45.00" stroke="#9a9a9a" stroke-width="0.9" stroke-opacity="0.7"/><line x1="218.20" y1="52.00" x2="224.50" y2="45.00" stroke="#9a9a9a" stroke-width="0.9" stroke-opacity="0.7"/><line x1="222.60" y1="52.00" x2="228.90" y2="45.00" stroke="#9a9a9a" stroke-width="0.9" stroke-opacity="0.7"/><line x1="227.00" y1="52.00" x2="233.30" y2="45.00" stroke="#9a9a9a" stroke-width="0.9" stroke-opacity="0.7"/><line x1="231.40" y1="52.00" x2="237.70" y2="45.00" stroke="#9a9a9a" stroke-width="0.9" stroke-opacity="0.7"/><line x1="235.80" y1="52.00" x2="242.10" y2="45.00" stroke="#9a9a9a" stroke-width="0.9" stroke-opacity="0.7"/><line x1="240.20" y1="52.00" x2="246.50" y2="45.00" stroke="#9a9a9a" stroke-width="0.9" stroke-opacity="0.7"/><line x1="244.60" y1="52.00" x2="250.90" y2="45.00" stroke="#9a9a9a" stroke-width="0.9" stroke-opacity="0.7"/><defs><radialGradient id="rg" cx="50%" cy="45%" r="62%"><stop offset="0" stop-color="#f6f6f6"/><stop offset="0.6" stop-color="#e2e2e2"/><stop offset="1" stop-color="#bcbcbc"/></radialGradient></defs><rect x="269" y="6" width="80" height="48" fill="url(#rg)"/><rect x="290.00" y="9.00" width="38.00" height="2.40" fill="#333" fill-opacity="0.85"/><rect x="276.00" y="19.00" width="2.40" height="2.40" fill="#f9c98d" fill-opacity="1"/><rect x="276.00" y="24.00" width="3.00" height="3.00" fill="#f9c98d" fill-opacity="1"/><rect x="280.67" y="19.00" width="2.40" height="2.40" fill="#f9c98d" fill-opacity="1"/><rect x="280.67" y="24.00" width="3.00" height="3.00" fill="#f9c98d" fill-opacity="1"/><rect x="285.34" y="19.00" width="2.40" height="2.40" fill="#f9c98d" fill-opacity="1"/><rect x="285.34" y="24.00" width="3.00" height="3.00" fill="#f9c98d" fill-opacity="1"/><rect x="290.01" y="19.00" width="2.40" height="2.40" fill="#f9c98d" fill-opacity="1"/><rect x="290.01" y="24.00" width="3.00" height="3.00" fill="#f9c98d" fill-opacity="1"/><rect x="294.68" y="19.00" width="2.40" height="2.40" fill="#f9c98d" fill-opacity="1"/><rect x="294.68" y="24.00" width="3.00" height="3.00" fill="#f9c98d" fill-opacity="1"/><rect x="299.35" y="19.00" width="2.40" height="2.40" fill="#f9c98d" fill-opacity="1"/><rect x="299.35" y="24.00" width="3.00" height="3.00" fill="#f9c98d" fill-opacity="1"/><rect x="304.02" y="19.00" width="2.40" height="2.40" fill="#f9c98d" fill-opacity="1"/><rect x="304.02" y="24.00" width="3.00" height="3.00" fill="#f9c98d" fill-opacity="1"/><rect x="308.69" y="19.00" width="2.40" height="2.40" fill="#f9c98d" fill-opacity="1"/><rect x="308.69" y="24.00" width="3.00" height="3.00" fill="#f9c98d" fill-opacity="1"/><rect x="313.36" y="19.00" width="2.40" height="2.40" fill="#f9c98d" fill-opacity="1"/><rect x="313.36" y="24.00" width="3.00" height="3.00" fill="#f9c98d" fill-opacity="1"/><rect x="318.03" y="19.00" width="2.40" height="2.40" fill="#f9c98d" fill-opacity="1"/><rect x="318.03" y="24.00" width="3.00" height="3.00" fill="#f9c98d" fill-opacity="1"/><rect x="322.70" y="19.00" width="2.40" height="2.40" fill="#f9c98d" fill-opacity="1"/><rect x="322.70" y="24.00" width="3.00" height="3.00" fill="#f9c98d" fill-opacity="1"/><rect x="327.37" y="19.00" width="2.40" height="2.40" fill="#f9c98d" fill-opacity="1"/><rect x="327.37" y="24.00" width="3.00" height="3.00" fill="#f9c98d" fill-opacity="1"/><rect x="332.04" y="19.00" width="2.40" height="2.40" fill="#f9c98d" fill-opacity="1"/><rect x="332.04" y="24.00" width="3.00" height="3.00" fill="#f9c98d" fill-opacity="1"/><rect x="336.71" y="19.00" width="2.40" height="2.40" fill="#f9c98d" fill-opacity="1"/><rect x="336.71" y="24.00" width="3.00" height="3.00" fill="#f9c98d" fill-opacity="1"/><rect x="341.38" y="19.00" width="2.40" height="2.40" fill="#f9c98d" fill-opacity="1"/><rect x="341.38" y="24.00" width="3.00" height="3.00" fill="#f9c98d" fill-opacity="1"/><rect x="274.00" y="22.60" width="71.00" height="1.60" fill="#fff" fill-opacity="0.9"/><line x1="271.00" y1="36.00" x2="278.20" y2="28.00" stroke="#555" stroke-width="0.9" stroke-opacity="0.8"/><line x1="275.47" y1="36.00" x2="282.67" y2="28.00" stroke="#555" stroke-width="0.9" stroke-opacity="0.8"/><line x1="279.93" y1="36.00" x2="287.13" y2="28.00" stroke="#555" stroke-width="0.9" stroke-opacity="0.8"/><line x1="284.40" y1="36.00" x2="291.60" y2="28.00" stroke="#555" stroke-width="0.9" stroke-opacity="0.8"/><line x1="288.87" y1="36.00" x2="296.07" y2="28.00" stroke="#555" stroke-width="0.9" stroke-opacity="0.8"/><line x1="293.33" y1="36.00" x2="300.53" y2="28.00" stroke="#555" stroke-width="0.9" stroke-opacity="0.8"/><line x1="297.80" y1="36.00" x2="305.00" y2="28.00" stroke="#555" stroke-width="0.9" stroke-opacity="0.8"/><line x1="302.27" y1="36.00" x2="309.47" y2="28.00" stroke="#555" stroke-width="0.9" stroke-opacity="0.8"/><line x1="306.73" y1="36.00" x2="313.93" y2="28.00" stroke="#555" stroke-width="0.9" stroke-opacity="0.8"/><line x1="311.20" y1="36.00" x2="318.40" y2="28.00" stroke="#555" stroke-width="0.9" stroke-opacity="0.8"/><line x1="315.67" y1="36.00" x2="322.87" y2="28.00" stroke="#555" stroke-width="0.9" stroke-opacity="0.8"/><line x1="320.13" y1="36.00" x2="327.33" y2="28.00" stroke="#555" stroke-width="0.9" stroke-opacity="0.8"/><line x1="324.60" y1="36.00" x2="331.80" y2="28.00" stroke="#555" stroke-width="0.9" stroke-opacity="0.8"/><line x1="329.07" y1="36.00" x2="336.27" y2="28.00" stroke="#555" stroke-width="0.9" stroke-opacity="0.8"/><line x1="333.53" y1="36.00" x2="340.73" y2="28.00" stroke="#555" stroke-width="0.9" stroke-opacity="0.8"/><rect x="292.00" y="38.40" width="1.30" height="1.30" fill="#3a9f7a" fill-opacity="1"/><rect x="293.80" y="38.50" width="33.20" height="1.00" fill="#9a9a9a" fill-opacity="0.5"/><rect x="292.00" y="42.40" width="1.30" height="1.30" fill="#f9c98d" fill-opacity="1"/><rect x="293.80" y="42.50" width="33.20" height="1.00" fill="#9a9a9a" fill-opacity="0.5"/><rect x="292.00" y="46.40" width="1.30" height="1.30" fill="#c8c8c8" fill-opacity="1"/><rect x="293.80" y="46.50" width="33.20" height="1.00" fill="#9a9a9a" fill-opacity="0.5"/><rect x="292.00" y="50.40" width="1.30" height="1.30" fill="#ffc000" fill-opacity="1"/><rect x="293.80" y="50.50" width="33.20" height="1.00" fill="#9a9a9a" fill-opacity="0.5"/><rect x="357.00" y="5.00" width="79.00" height="52.00" fill="none" stroke="#d8d8d8" stroke-width="0.8" stroke-dasharray="0.8 2.6"/><rect x="382.00" y="9.50" width="30.00" height="1.80" fill="#999" fill-opacity="0.8"/><rect x="360.00" y="14.00" width="2.60" height="0.90" fill="#aaa" fill-opacity="0.7"/><rect x="360.00" y="17.40" width="2.60" height="0.90" fill="#aaa" fill-opacity="0.7"/><rect x="360.00" y="20.80" width="2.60" height="0.90" fill="#aaa" fill-opacity="0.7"/><rect x="360.00" y="24.20" width="2.60" height="0.90" fill="#aaa" fill-opacity="0.7"/><rect x="363.00" y="20.00" width="1.40" height="7.00" fill="#c8ccd2" fill-opacity="1"/><rect x="364.40" y="18.00" width="1.50" height="9.00" fill="#f9c98d" fill-opacity="1"/><rect x="365.90" y="21.00" width="1.50" height="6.00" fill="#f9c98d" fill-opacity="0.85"/><rect x="367.75" y="20.00" width="1.40" height="7.00" fill="#c8ccd2" fill-opacity="1"/><rect x="369.15" y="18.00" width="1.50" height="9.00" fill="#f9c98d" fill-opacity="1"/><rect x="370.65" y="21.00" width="1.50" height="6.00" fill="#f9c98d" fill-opacity="0.85"/><rect x="372.50" y="20.00" width="1.40" height="7.00" fill="#c8ccd2" fill-opacity="1"/><rect x="373.90" y="18.00" width="1.50" height="9.00" fill="#f9c98d" fill-opacity="1"/><rect x="375.40" y="21.00" width="1.50" height="6.00" fill="#f9c98d" fill-opacity="0.85"/><rect x="377.25" y="20.00" width="1.40" height="7.00" fill="#c8ccd2" fill-opacity="1"/><rect x="378.65" y="18.00" width="1.50" height="9.00" fill="#f9c98d" fill-opacity="1"/><rect x="380.15" y="21.00" width="1.50" height="6.00" fill="#f9c98d" fill-opacity="0.85"/><rect x="382.00" y="20.00" width="1.40" height="7.00" fill="#c8ccd2" fill-opacity="1"/><rect x="383.40" y="18.00" width="1.50" height="9.00" fill="#f9c98d" fill-opacity="1"/><rect x="384.90" y="21.00" width="1.50" height="6.00" fill="#f9c98d" fill-opacity="0.85"/><rect x="386.75" y="20.00" width="1.40" height="7.00" fill="#c8ccd2" fill-opacity="1"/><rect x="388.15" y="18.00" width="1.50" height="9.00" fill="#f9c98d" fill-opacity="1"/><rect x="389.65" y="21.00" width="1.50" height="6.00" fill="#f9c98d" fill-opacity="0.85"/><rect x="391.50" y="20.00" width="1.40" height="7.00" fill="#c8ccd2" fill-opacity="1"/><rect x="392.90" y="18.00" width="1.50" height="9.00" fill="#f9c98d" fill-opacity="1"/><rect x="394.40" y="21.00" width="1.50" height="6.00" fill="#f9c98d" fill-opacity="0.85"/><rect x="396.25" y="20.00" width="1.40" height="7.00" fill="#c8ccd2" fill-opacity="1"/><rect x="397.65" y="18.00" width="1.50" height="9.00" fill="#f9c98d" fill-opacity="1"/><rect x="399.15" y="21.00" width="1.50" height="6.00" fill="#f9c98d" fill-opacity="0.85"/><rect x="401.00" y="20.00" width="1.40" height="7.00" fill="#c8ccd2" fill-opacity="1"/><rect x="402.40" y="18.00" width="1.50" height="9.00" fill="#f9c98d" fill-opacity="1"/><rect x="403.90" y="21.00" width="1.50" height="6.00" fill="#f9c98d" fill-opacity="0.85"/><rect x="405.75" y="20.00" width="1.40" height="7.00" fill="#c8ccd2" fill-opacity="1"/><rect x="407.15" y="18.00" width="1.50" height="9.00" fill="#f9c98d" fill-opacity="1"/><rect x="408.65" y="21.00" width="1.50" height="6.00" fill="#f9c98d" fill-opacity="0.85"/><rect x="410.50" y="20.00" width="1.40" height="7.00" fill="#c8ccd2" fill-opacity="1"/><rect x="411.90" y="18.00" width="1.50" height="9.00" fill="#f9c98d" fill-opacity="1"/><rect x="413.40" y="21.00" width="1.50" height="6.00" fill="#f9c98d" fill-opacity="0.85"/><rect x="415.25" y="20.00" width="1.40" height="7.00" fill="#c8ccd2" fill-opacity="1"/><rect x="416.65" y="18.00" width="1.50" height="9.00" fill="#f9c98d" fill-opacity="1"/><rect x="418.15" y="21.00" width="1.50" height="6.00" fill="#f9c98d" fill-opacity="0.85"/><rect x="420.00" y="20.00" width="1.40" height="7.00" fill="#c8ccd2" fill-opacity="1"/><rect x="421.40" y="18.00" width="1.50" height="9.00" fill="#f9c98d" fill-opacity="1"/><rect x="422.90" y="21.00" width="1.50" height="6.00" fill="#f9c98d" fill-opacity="0.85"/><rect x="424.75" y="20.00" width="1.40" height="7.00" fill="#c8ccd2" fill-opacity="1"/><rect x="426.15" y="18.00" width="1.50" height="9.00" fill="#f9c98d" fill-opacity="1"/><rect x="427.65" y="21.00" width="1.50" height="6.00" fill="#f9c98d" fill-opacity="0.85"/><rect x="429.50" y="20.00" width="1.40" height="7.00" fill="#c8ccd2" fill-opacity="1"/><rect x="430.90" y="18.00" width="1.50" height="9.00" fill="#f9c98d" fill-opacity="1"/><rect x="432.40" y="21.00" width="1.50" height="6.00" fill="#f9c98d" fill-opacity="0.85"/><line x1="359.00" y1="35.50" x2="365.30" y2="28.50" stroke="#9a9a9a" stroke-width="0.9" stroke-opacity="0.7"/><line x1="363.40" y1="35.50" x2="369.70" y2="28.50" stroke="#9a9a9a" stroke-width="0.9" stroke-opacity="0.7"/><line x1="367.80" y1="35.50" x2="374.10" y2="28.50" stroke="#9a9a9a" stroke-width="0.9" stroke-opacity="0.7"/><line x1="372.20" y1="35.50" x2="378.50" y2="28.50" stroke="#9a9a9a" stroke-width="0.9" stroke-opacity="0.7"/><line x1="376.60" y1="35.50" x2="382.90" y2="28.50" stroke="#9a9a9a" stroke-width="0.9" stroke-opacity="0.7"/><line x1="381.00" y1="35.50" x2="387.30" y2="28.50" stroke="#9a9a9a" stroke-width="0.9" stroke-opacity="0.7"/><line x1="385.40" y1="35.50" x2="391.70" y2="28.50" stroke="#9a9a9a" stroke-width="0.9" stroke-opacity="0.7"/><line x1="389.80" y1="35.50" x2="396.10" y2="28.50" stroke="#9a9a9a" stroke-width="0.9" stroke-opacity="0.7"/><line x1="394.20" y1="35.50" x2="400.50" y2="28.50" stroke="#9a9a9a" stroke-width="0.9" stroke-opacity="0.7"/><line x1="398.60" y1="35.50" x2="404.90" y2="28.50" stroke="#9a9a9a" stroke-width="0.9" stroke-opacity="0.7"/><line x1="403.00" y1="35.50" x2="409.30" y2="28.50" stroke="#9a9a9a" stroke-width="0.9" stroke-opacity="0.7"/><line x1="407.40" y1="35.50" x2="413.70" y2="28.50" stroke="#9a9a9a" stroke-width="0.9" stroke-opacity="0.7"/><line x1="411.80" y1="35.50" x2="418.10" y2="28.50" stroke="#9a9a9a" stroke-width="0.9" stroke-opacity="0.7"/><line x1="416.20" y1="35.50" x2="422.50" y2="28.50" stroke="#9a9a9a" stroke-width="0.9" stroke-opacity="0.7"/><line x1="420.60" y1="35.50" x2="426.90" y2="28.50" stroke="#9a9a9a" stroke-width="0.9" stroke-opacity="0.7"/><rect x="379.00" y="38.40" width="1.30" height="1.30" fill="#3a9f7a" fill-opacity="1"/><rect x="380.80" y="38.50" width="34.20" height="1.00" fill="#9a9a9a" fill-opacity="0.5"/><rect x="379.00" y="42.40" width="1.30" height="1.30" fill="#f9c98d" fill-opacity="1"/><rect x="380.80" y="42.50" width="34.20" height="1.00" fill="#9a9a9a" fill-opacity="0.5"/><rect x="379.00" y="46.40" width="1.30" height="1.30" fill="#c8c8c8" fill-opacity="1"/><rect x="380.80" y="46.50" width="34.20" height="1.00" fill="#9a9a9a" fill-opacity="0.5"/><rect x="379.00" y="50.40" width="1.30" height="1.30" fill="#ffc000" fill-opacity="1"/><rect x="380.80" y="50.50" width="34.20" height="1.00" fill="#9a9a9a" fill-opacity="0.5"/></svg>
<svg style="position:absolute;left:694px;top:71px;" width="17" height="61" viewBox="0 0 17 61"><rect x="0.5" y="0.5" width="16" height="14.5" fill="#f3f3f3" stroke="#cfcfcf"/><path d="M3.5 11 L8.5 5 L13.5 11" fill="none" stroke="#cfcfcf" stroke-width="1.1"/>
<rect x="0.5" y="21" width="16" height="17.5" fill="#f3f3f3" stroke="#bdbdbd"/><path d="M2.5 26 L8.5 33 L14.5 26" fill="none" stroke="#555" stroke-width="1.2"/>
<rect x="0.5" y="40" width="16" height="19.5" fill="#f3f3f3" stroke="#bdbdbd"/><path d="M2.5 43.5 H14.5" stroke="#333" stroke-width="1.2"/><path d="M2.5 47 L8.5 54 L14.5 47" fill="none" stroke="#555" stroke-width="1.2"/></svg>
<svg style="position:absolute;left:739px;top:72px;" width="32" height="28" viewBox="0 0 32 28"><rect x="1.2" y="1.2" width="28.5" height="25.5" fill="#fff" stroke="#8f8f8f" stroke-width="1.4"/>
<rect x="1.2" y="1.2" width="28.5" height="4.6" fill="#8f8f8f"/>
<path d="M8.4 5.8 V26.7 M15.5 5.8 V26.7 M22.5 5.8 V26.7 M1.2 10.6 H29.7 M1.2 15.6 H29.7 M1.2 20.5 H29.7" stroke="#a8a8a8" stroke-width="1"/>
<path d="M11.3 10.2 H22.7 V20.6 H11.3 M16.3 15.5 H22.7 M16.3 15.5 V20.6" fill="none" stroke="#f47a20" stroke-width="1.3"/>
<path d="M8.5 21 C8 14 12 10 19 10" fill="none" stroke="#1a6dc4" stroke-width="2"/><path d="M16 6.5 L20 10 L16 13.5" fill="none" stroke="#1a6dc4" stroke-width="2"/><path d="M5 17.5 L8.5 21.5 L12 17.5" fill="none" stroke="#1a6dc4" stroke-width="2"/></svg>
<svg style="position:absolute;left:790px;top:73px;" width="34" height="31" viewBox="0 0 34 31"><rect x="1.2" y="1.2" width="28.7" height="24.5" fill="#fff" stroke="#8f8f8f" stroke-width="1.4"/>
<rect x="1.2" y="1.2" width="28.7" height="4.2" fill="#8f8f8f"/>
<path d="M8.5 5.4 V25.7 M15.6 5.4 V25.7 M22.7 5.4 V25.7 M1.2 10.2 H29.9 M1.2 15.1 H29.9 M1.2 20.2 H29.9" stroke="#a8a8a8" stroke-width="1"/>
<path d="M22.6 13 V10.2 H8.5 V20.2 H15" fill="none" stroke="#f47a20" stroke-width="1.3"/>
<rect x="15.5" y="14.3" width="16.5" height="15.3" fill="#fff" stroke="#8f8f8f" stroke-width="1.3"/>
<rect x="17.7" y="19.6" width="2.8" height="9.5" fill="#fff" stroke="#8f8f8f" stroke-width="0.9"/>
<rect x="20.6" y="16.5" width="2.8" height="12.6" fill="#d8d8d8" stroke="#8f8f8f" stroke-width="0.9"/>
<rect x="23.5" y="19.6" width="2.8" height="9.5" fill="#fff" stroke="#8f8f8f" stroke-width="0.9"/>
<rect x="26.4" y="21.6" width="2.8" height="7.5" fill="#d8d8d8" stroke="#8f8f8f" stroke-width="0.9"/></svg>
<svg style="position:absolute;left:875px;top:73px;" width="26" height="28" viewBox="0 0 26 28"><rect x="1" y="9" width="7" height="18" fill="#1a6dc4"/><rect x="9" y="1" width="7" height="26" fill="#f8c98a"/><rect x="17.2" y="6" width="7" height="21" fill="#8c8c8c"/><circle cx="4.5" cy="18.5" r="0.6" fill="#3aa"/><circle cx="12.5" cy="7.5" r="0.6" fill="#ffc000"/><circle cx="12.8" cy="14" r="0.6" fill="#ffc000"/></svg>
<svg style="position:absolute;left:968px;top:73px;" width="31" height="27" viewBox="0 0 31 27"><path d="M1.5 1.3 H28.9 V21.7 H10.3 L8.3 24 V25.7 H1.5 Z" fill="#fff" stroke="#8f8f8f" stroke-width="1.3"/>
<path d="M8.3 24 L10.8 21.7 H17 L14.8 24.3 H8.3" fill="#fff" stroke="#8f8f8f" stroke-width="1"/>
<rect x="6.6" y="9" width="3.9" height="9" fill="#fff" stroke="#8f8f8f" stroke-width="1"/>
<rect x="10.5" y="4.4" width="4" height="13.6" fill="#d8d8d8" stroke="#8f8f8f" stroke-width="1"/>
<rect x="16.5" y="8.4" width="4" height="9.6" fill="#fff" stroke="#8f8f8f" stroke-width="1"/>
<rect x="20.5" y="11.6" width="3.8" height="6.4" fill="#d8d8d8" stroke="#8f8f8f" stroke-width="1"/></svg>
<svg style="position:absolute;left:1046px;top:146px;" width="13" height="8" viewBox="0 0 13 8"><path d="M1 7 L6.5 1.5 L12 7" fill="none" stroke="#555" stroke-width="1.1"/></svg>
<svg style="position:absolute;left:147px;top:177px;" width="9" height="6" viewBox="0 0 9 6"><polygon points="0.5,0.5 8.5,0.5 4.5,4.8" fill="#6a6a6a"/></svg>
<svg style="position:absolute;left:175px;top:175px;" width="4" height="13" viewBox="0 0 4 13"><rect x="1.2" y="0.5" width="1.6" height="1.6" fill="#a0a0a0"/><rect x="1.2" y="5.2" width="1.6" height="1.6" fill="#a0a0a0"/><rect x="1.2" y="9.7" width="1.6" height="1.6" fill="#a0a0a0"/></svg>
<svg style="position:absolute;left:205px;top:176px;" width="12" height="11" viewBox="0 0 12 11"><path d="M1 1 L10.5 10 M10.5 1 L1 10" stroke="#c2c2c2" stroke-width="1.6"/></svg>
<svg style="position:absolute;left:240px;top:176px;" width="15" height="11" viewBox="0 0 15 11"><path d="M1 5.5 L5 9.5 L13.5 1" fill="none" stroke="#c2c2c2" stroke-width="1.8"/></svg>
<div style="position:absolute;left:277.50px;top:173.65px;font-family:'Liberation Serif', serif;font-size:14px;line-height:14px;height:14px;font-weight:400;color:#666;white-space:pre;font-style:italic;">f</div>
<div style="position:absolute;left:282.50px;top:176.69px;font-family:'Liberation Serif', serif;font-size:11px;line-height:11px;height:11px;font-weight:400;color:#666;white-space:pre;font-style:italic;">x</div>
<svg style="position:absolute;left:1047px;top:177px;" width="12" height="7" viewBox="0 0 12 7"><path d="M1 1 L6 5.5 L11 1" fill="none" stroke="#b8b8b8" stroke-width="1.4"/></svg>
<svg style="position:absolute;left:764px;top:282px;" width="28" height="26" viewBox="0 0 28 26"><path d="M2.3 14.3 L11 5.2 L19.7 14 L11.4 23.3 Z" fill="#fff" stroke="#8a8a8a" stroke-width="1.3"/>
<path d="M10.5 10.5 V4 A2.3 2.3 0 0 1 14.5 4 V8" fill="none" stroke="#8a8a8a" stroke-width="1.2"/><circle cx="12.4" cy="10.6" r="1.3" fill="#8a8a8a"/>
<path d="M17.5 7.5 C22 8 25 11 24.5 14.5 L21.7 22.5 L21.2 16.5 L19.7 14 Z" fill="#8a8a8a"/></svg>
<svg style="position:absolute;left:805px;top:282px;" width="24" height="28" viewBox="0 0 24 28"><path d="M12.4 2.3 L21.9 9.3 L18.6 20.7 H6.3 L2.6 9.3 Z" fill="#fff" stroke="#8a8a8a" stroke-width="1.2"/>
<path d="M6.3 20.7 H18.6" stroke="#8a8a8a" stroke-width="1.8"/><path d="M6 21.5 L5 25.5 H19.8 L18.8 21.5 Z" fill="#f4f4f4"/></svg>
<svg style="position:absolute;left:844px;top:282px;" width="24" height="26" viewBox="0 0 24 26"><path d="M8.2 5 H22.8 M8.2 2.5 V7.5 M22.8 2.5 V7.5" stroke="#8a8a8a" stroke-width="1.1"/>
<path d="M4.4 9.1 V23.6 M1.5 9.1 H7.3 M1.5 23.6 H7.3" stroke="#8a8a8a" stroke-width="1.1"/>
<rect x="8.2" y="9.1" width="14.6" height="14.5" fill="#7d7d7d"/>
<path d="M15.5 11 V21.8 M10 16.4 H21" stroke="#fff" stroke-width="1"/><path d="M13.6 12.9 L15.5 11 L17.4 12.9 M13.6 19.9 L15.5 21.8 L17.4 19.9 M11.9 14.5 L10 16.4 L11.9 18.3 M19.1 14.5 L21 16.4 L19.1 18.3" fill="none" stroke="#fff" stroke-width="1"/></svg>
<div style="position:absolute;left:882px;top:281px;width:30px;height:30px;background:#aeaeae;"></div>
<svg style="position:absolute;left:886px;top:284px;" width="22" height="24" viewBox="0 0 22 24"><rect x="1" y="7" width="7" height="15" fill="#0b7a3e"/><rect x="8" y="0.8" width="7" height="21.2" fill="#0b7a3e"/><rect x="15" y="3.7" width="6" height="18.3" fill="#0b7a3e"/><path d="M8 1 V22 M15 4 V22" stroke="#aeaeae" stroke-width="0.8"/></svg>
<svg style="position:absolute;left:8px;top:696px;" width="16" height="15" viewBox="0 0 16 15"><circle cx="4" cy="4" r="3" fill="#444"/><path d="M7 4.5 H14.5 V13.5 H2.5 V8" fill="none" stroke="#555" stroke-width="1"/><path d="M5 8.5 H14.5 M5 11 H14.5 M7.5 6 V13.5 M10.5 6 V13.5" stroke="#666" stroke-width="0.8"/></svg>
<svg style="position:absolute;left:777px;top:696px;" width="16" height="16" viewBox="0 0 16 16"><path d="M1.5 1.5 H14.5 V14.5 H1.5 Z M1.5 5.8 H14.5 M1.5 10.2 H14.5 M5.8 1.5 V14.5 M10.2 1.5 V14.5" fill="none" stroke="#8a8a8a" stroke-width="1.1"/></svg>
<svg style="position:absolute;left:815px;top:696px;" width="16" height="15" viewBox="0 0 16 15"><rect x="1.5" y="1.5" width="13" height="12" fill="none" stroke="#777" stroke-width="1"/><rect x="3.5" y="3.5" width="9" height="8" fill="none" stroke="#777" stroke-width="1"/><path d="M5.5 6 H10.5 M5.5 8 H10.5 M5.5 10 H10.5" stroke="#777" stroke-width="0.8"/></svg>
<svg style="position:absolute;left:853px;top:696px;" width="16" height="15" viewBox="0 0 16 15"><path d="M1.5 1.5 H14.5 V13.5 H1.5 Z" fill="none" stroke="#777" stroke-width="1"/><path d="M5.5 1.5 V8.5 H10.5 V1.5 M8 1.5 V8.5" fill="none" stroke="#777" stroke-width="1"/></svg>
<div style="position:absolute;left:885px;top:703px;width:6.5px;height:2px;background:#333;"></div>
<div style="position:absolute;left:895px;top:703px;width:100px;height:1px;background:#a8a8a8;"></div>
<svg style="position:absolute;left:942px;top:697px;" width="8" height="13" viewBox="0 0 8 13"><rect x="1" y="0.8" width="5.5" height="11" fill="#777"/><path d="M3.7 2 V11" stroke="#aaa" stroke-width="0.8" stroke-dasharray="1 1"/></svg>
<svg style="position:absolute;left:997px;top:698px;" width="11" height="11" viewBox="0 0 11 11"><path d="M5.5 1 V10 M1 5.5 H10" stroke="#333" stroke-width="1.6"/></svg>
<div style="position:absolute;left:1017.50px;top:697.34px;font-family:'Liberation Sans', sans-serif;font-size:12px;line-height:12px;height:12px;font-weight:400;color:#262626;white-space:pre;transform:scaleX(0.8962);transform-origin:0 0;">100 %</div>
</body></html>
